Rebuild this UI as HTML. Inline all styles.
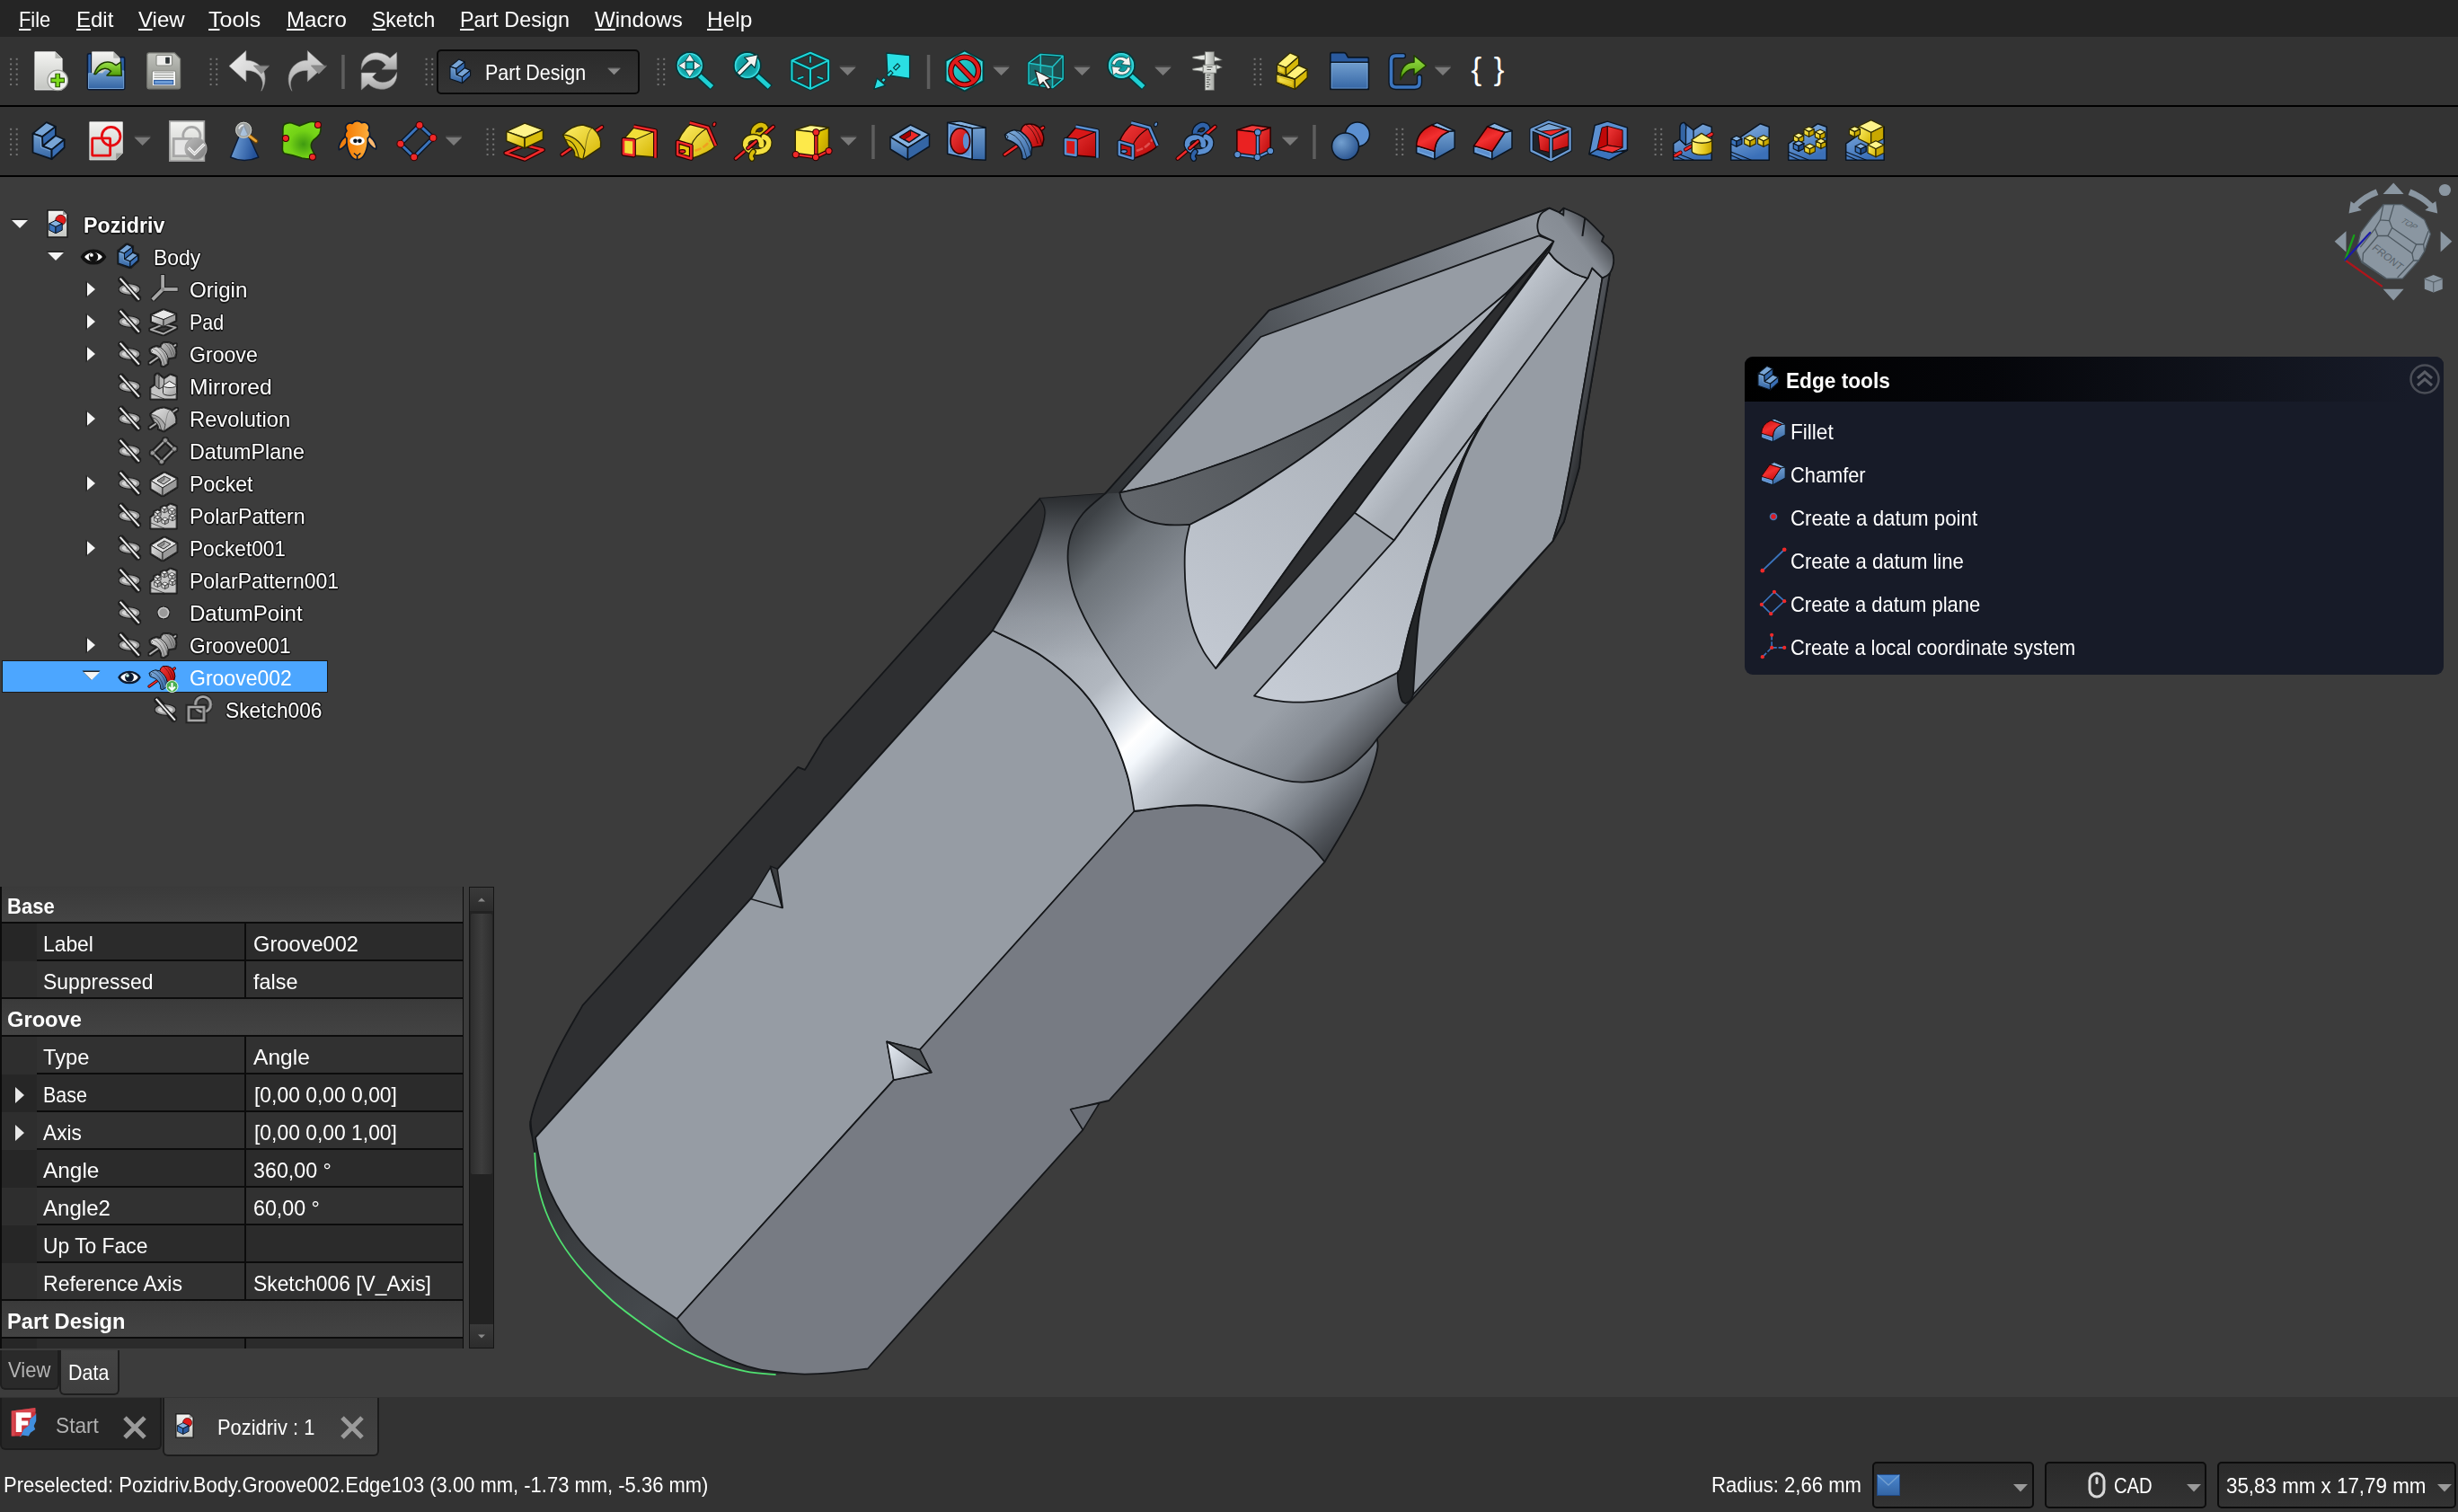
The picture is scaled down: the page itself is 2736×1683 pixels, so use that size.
<!DOCTYPE html><html><head><meta charset="utf-8"><title>FreeCAD</title><style>
*{box-sizing:border-box}
html,body{margin:0;padding:0}
body{width:2736px;height:1683px;overflow:hidden;background:#3c3c3c;position:relative;font-family:"Liberation Sans",sans-serif;color:#fff}
div,span.t,svg{position:absolute}
span.t{white-space:pre;transform-origin:0 50%;line-height:1;display:block}
span.o{text-shadow:-1.5px 0 #1c1c1c,1.5px 0 #1c1c1c,0 -1.5px #1c1c1c,0 1.5px #1c1c1c,-1px -1px #1c1c1c,1px 1px #1c1c1c,-1px 1px #1c1c1c,1px -1px #1c1c1c}
span.mn::first-letter{text-decoration:underline}
</style></head><body>
<svg width="2736" height="1683" viewBox="0 0 2736 1683" style="left:0;top:0"><defs><linearGradient id="gch" gradientUnits="userSpaceOnUse" x1="595.2" y1="1282.9" x2="863.6" y2="1530.1"><stop offset="0" stop-color="#2a2c2e"/><stop offset="0.25" stop-color="#3a3d40"/><stop offset="0.6" stop-color="#45494d"/><stop offset="0.85" stop-color="#34373a"/><stop offset="1" stop-color="#26282a"/></linearGradient><linearGradient id="gn2" gradientUnits="userSpaceOnUse" x1="987.2" y1="1159.4" x2="1029.9" y2="1196.0"><stop offset="0" stop-color="#e8eef6"/><stop offset="1" stop-color="#a0a6ae"/></linearGradient><linearGradient id="gcol" gradientUnits="userSpaceOnUse" x1="850.0" y1="850.0" x2="1225.0" y2="1225.0"><stop offset="0.000" stop-color="#989ea6"/><stop offset="0.133" stop-color="#9ca2aa"/><stop offset="0.240" stop-color="#a2a8b0"/><stop offset="0.387" stop-color="#b2b8c0"/><stop offset="0.467" stop-color="#dde3ea"/><stop offset="0.513" stop-color="#ffffff"/><stop offset="0.547" stop-color="#f4f8fc"/><stop offset="0.600" stop-color="#c8ced6"/><stop offset="0.667" stop-color="#b0b6be"/><stop offset="0.787" stop-color="#9ca2aa"/><stop offset="0.867" stop-color="#787e86"/><stop offset="0.933" stop-color="#50545a"/><stop offset="0.987" stop-color="#383b3f"/></linearGradient><linearGradient id="gcolv" gradientUnits="userSpaceOnUse" x1="0" y1="548" x2="0" y2="735"><stop offset="0" stop-color="#26282b" stop-opacity="1"/><stop offset="0.1" stop-color="#2e3134" stop-opacity="0.92"/><stop offset="0.28" stop-color="#34373b" stop-opacity="0.66"/><stop offset="0.5" stop-color="#3a3d42" stop-opacity="0.36"/><stop offset="0.75" stop-color="#40444a" stop-opacity="0.13"/><stop offset="1" stop-color="#40444a" stop-opacity="0"/></linearGradient><linearGradient id="gneck" gradientUnits="userSpaceOnUse" x1="850.0" y1="850.0" x2="1225.0" y2="1225.0"><stop offset="0.000" stop-color="#2c2f32"/><stop offset="0.120" stop-color="#3e4246"/><stop offset="0.213" stop-color="#6c7278"/><stop offset="0.347" stop-color="#8a9098"/><stop offset="0.480" stop-color="#9aa0a8"/><stop offset="0.680" stop-color="#9aa0a8"/><stop offset="0.787" stop-color="#838991"/><stop offset="0.853" stop-color="#5e6268"/><stop offset="0.907" stop-color="#34373a"/></linearGradient><linearGradient id="gbev" gradientUnits="userSpaceOnUse" x1="1230" y1="550" x2="1720" y2="235"><stop offset="0" stop-color="#2e3134"/><stop offset="0.37" stop-color="#464a4f"/><stop offset="0.55" stop-color="#60656b"/><stop offset="0.8" stop-color="#7e848c"/><stop offset="1" stop-color="#949aa2"/></linearGradient><linearGradient id="gcr" gradientUnits="userSpaceOnUse" x1="1250" y1="560" x2="1680" y2="330"><stop offset="0" stop-color="#62666b"/><stop offset="0.5" stop-color="#505458"/><stop offset="1" stop-color="#3c3f42"/></linearGradient><linearGradient id="gf1" gradientUnits="userSpaceOnUse" x1="1560" y1="400" x2="1330" y2="720"><stop offset="0" stop-color="#a8aeb6"/><stop offset="1" stop-color="#c2c8d1"/></linearGradient><linearGradient id="grid" gradientUnits="userSpaceOnUse" x1="1560" y1="420" x2="1625" y2="470"><stop offset="0" stop-color="#c8ced6"/><stop offset="0.2" stop-color="#e6ecf4"/><stop offset="0.5" stop-color="#c0c6ce"/><stop offset="1" stop-color="#aab0b8"/></linearGradient><linearGradient id="gf2" gradientUnits="userSpaceOnUse" x1="1640" y1="500" x2="1420" y2="790"><stop offset="0" stop-color="#aab0b8"/><stop offset="1" stop-color="#c6ccd5"/></linearGradient><linearGradient id="gstrip" gradientUnits="userSpaceOnUse" x1="1740" y1="480" x2="1765" y2="486"><stop offset="0" stop-color="#5a5e64"/><stop offset="1" stop-color="#2e3033"/></linearGradient><linearGradient id="gtip" gradientUnits="userSpaceOnUse" x1="1722.5" y1="291.4" x2="1781.5" y2="246.2"><stop offset="0" stop-color="#8e949c"/><stop offset="0.55" stop-color="#868c94"/><stop offset="0.8" stop-color="#5a5e64"/><stop offset="1" stop-color="#44484c"/></linearGradient></defs><path d="M1157.7 554.8L917.2 821.8L898.9 852.3L895.8 856.9L888.2 853.8L648.5 1119.1C643.9 1127.3 629.1 1152.1 621.0 1168.5C612.9 1184.9 604.8 1204.2 599.7 1217.4C594.6 1230.6 591.8 1240.3 590.5 1247.9C589.2 1255.5 591.1 1260.0 592.0 1263.1C592.9 1266.1 595.3 1265.7 596.0 1266.2L1104.9 701.8C1109.0 694.8 1121.2 675.6 1129.3 660.0C1137.4 644.4 1148.0 623.0 1153.7 608.2C1159.4 593.5 1162.8 580.4 1163.5 571.5C1164.2 562.6 1158.7 557.6 1157.7 554.8Z" fill="#2e2f31" stroke="#15171a" stroke-width="1.8" stroke-linejoin="round" /><path d="M596.0 1266.2C596.9 1270.8 598.6 1283.7 601.2 1293.5C603.8 1303.3 607.1 1314.6 611.7 1325.2C616.3 1335.8 622.0 1346.4 628.7 1357.0C635.4 1367.6 643.2 1378.8 652.0 1388.7C660.8 1398.6 671.0 1407.4 681.6 1416.2C692.2 1425.0 703.4 1432.9 715.4 1441.6C727.4 1450.2 747.1 1463.7 753.5 1468.1C756.3 1471.4 764.1 1482.4 770.5 1488.2C776.9 1494.0 783.9 1498.4 791.6 1503.0C799.4 1507.6 808.2 1512.2 817.0 1515.7C825.8 1519.2 834.7 1522.1 844.6 1524.2C854.5 1526.3 871.0 1527.7 876.3 1528.4L863.6 1530.1C858.0 1529.5 841.7 1528.7 829.7 1526.3C817.7 1523.9 804.3 1520.3 791.6 1515.7C778.9 1511.1 765.8 1505.5 753.5 1498.8C741.2 1492.1 729.6 1484.0 717.6 1475.5C705.6 1467.0 692.9 1457.9 681.6 1448.0C670.3 1438.1 659.3 1427.1 649.8 1416.2C640.3 1405.3 631.4 1393.7 624.4 1382.4C617.4 1371.1 611.9 1359.8 607.5 1348.5C603.1 1337.2 600.0 1325.6 598.0 1314.7C596.0 1303.8 595.7 1288.2 595.2 1282.9L591.0 1251.2Z" fill="url(#gch)" stroke="none" stroke-width="1.8" stroke-linejoin="round" /><path d="M590.5 1247.9C590.7 1250.2 591.1 1255.9 591.9 1261.7C592.7 1267.5 594.7 1279.4 595.2 1282.9" fill="none" stroke="#15171a" stroke-width="1.8"/><path d="M1104.9 701.8C1114.1 706.5 1143.0 718.9 1159.8 730.2C1176.6 741.6 1192.9 755.6 1205.6 769.9C1218.3 784.1 1228.0 800.5 1236.1 815.7C1244.2 831.0 1249.8 846.9 1254.4 861.4C1259.0 875.9 1262.1 895.7 1263.6 902.6L1023.8 1168.5L987.2 1159.4L994.8 1202.1L753.5 1468.1C747.1 1463.7 727.4 1450.2 715.4 1441.6C703.4 1432.9 692.2 1425.0 681.6 1416.2C671.0 1407.4 660.8 1398.6 652.0 1388.7C643.2 1378.8 635.4 1367.6 628.7 1357.0C622.0 1346.4 616.3 1335.8 611.7 1325.2C607.1 1314.6 603.8 1303.3 601.2 1293.5C598.6 1283.7 596.9 1270.8 596.0 1266.2L596.0 1266.2Z" fill="#969ca4" stroke="#15171a" stroke-width="1.8" stroke-linejoin="round" /><path d="M1262.5 903.0C1270.9 902.0 1297.5 897.9 1312.7 896.9C1327.9 895.9 1339.8 895.9 1353.4 897.3C1367.0 898.7 1380.5 901.0 1394.1 905.4C1407.7 909.8 1423.9 917.6 1434.8 923.7C1445.7 929.8 1452.6 936.2 1459.2 942.1C1465.8 948.0 1472.0 956.4 1474.5 959.3L1234.4 1225.0L1191.7 1234.8L1205.4 1257.6L965.9 1523.5C959.3 1524.3 937.9 1527.1 926.2 1528.1C914.5 1529.1 904.0 1529.5 895.7 1529.6C887.4 1529.6 884.8 1529.3 876.3 1528.4C867.8 1527.5 854.5 1526.3 844.6 1524.2C834.7 1522.1 825.8 1519.2 817.0 1515.7C808.2 1512.2 799.4 1507.6 791.6 1503.0C783.9 1498.4 776.9 1494.0 770.5 1488.2C764.1 1482.4 756.3 1471.4 753.5 1468.1L994.8 1202.1L1036.7 1193.6L1023.8 1168.5Z" fill="#777b83" stroke="#15171a" stroke-width="1.8" stroke-linejoin="round" /><path d="M595.2 1282.9C595.7 1288.2 596.0 1303.8 598.0 1314.7C600.0 1325.6 603.1 1337.2 607.5 1348.5C611.9 1359.8 617.4 1371.1 624.4 1382.4C631.4 1393.7 640.3 1405.3 649.8 1416.2C659.3 1427.1 670.3 1438.1 681.6 1448.0C692.9 1457.9 705.6 1467.0 717.6 1475.5C729.6 1484.0 741.2 1492.1 753.5 1498.8C765.8 1505.5 778.9 1511.1 791.6 1515.7C804.3 1520.3 817.7 1523.9 829.7 1526.3C841.7 1528.7 858.0 1529.5 863.6 1530.1" fill="none" stroke="#50e070" stroke-width="1.8"/><path d="M987.2 1159.4L1036.7 1193.6L994.8 1202.1Z" fill="url(#gn2)" stroke="#15171a" stroke-width="1.5" stroke-linejoin="round" /><path d="M987.2 1159.4L1023.8 1168.5L1036.7 1193.6Z" fill="#4e5256" stroke="#15171a" stroke-width="1.5" stroke-linejoin="round" /><path d="M836.2 1000.7L857.5 965.6L870.6 1010.5Z" fill="#939aa2" stroke="#15171a" stroke-width="1.5" stroke-linejoin="round" /><path d="M857.5 964.1L865.2 967.1L871.3 1010.5Z" fill="#3a3c3f" stroke="#15171a" stroke-width="1.5" stroke-linejoin="round" /><path d="M1191.7 1234.8L1223.7 1228.0L1205.4 1257.6Z" fill="#6a6e76" stroke="#15171a" stroke-width="1.5" stroke-linejoin="round" /><path d="M1157.7 554.8L1230.0 549.6L1400.0 700.0L1532.4 820.0C1532.6 822.0 1534.1 826.8 1533.4 832.2C1532.7 837.6 1531.3 843.7 1528.4 852.5C1525.5 861.3 1521.6 873.2 1516.2 885.1C1510.8 897.0 1502.8 911.3 1495.8 923.7C1488.8 936.1 1478.0 953.4 1474.5 959.3C1472.0 956.4 1465.8 948.0 1459.2 942.1C1452.6 936.2 1445.7 929.8 1434.8 923.7C1423.9 917.6 1407.7 909.8 1394.1 905.4C1380.5 901.0 1367.0 898.7 1353.4 897.3C1339.8 895.9 1327.9 895.9 1312.7 896.9C1297.5 897.9 1270.9 902.0 1262.5 903.0C1261.2 896.1 1258.8 875.9 1254.4 861.4C1250.0 846.9 1244.2 831.0 1236.1 815.7C1228.0 800.5 1218.3 784.1 1205.6 769.9C1192.9 755.6 1176.6 741.6 1159.8 730.2C1143.0 718.9 1114.1 706.5 1104.9 701.8C1109.0 694.8 1121.2 675.6 1129.3 660.0C1137.4 644.4 1148.0 623.0 1153.7 608.2C1159.4 593.5 1162.8 580.4 1163.5 571.5C1164.2 562.6 1158.7 557.6 1157.7 554.8Z" fill="url(#gcol)" stroke="#15171a" stroke-width="1.8" stroke-linejoin="round" /><path d="M1157.7 554.8L1230.0 549.6L1300.0 640.0L1240.0 760.0L1104.9 701.8C1109.0 694.8 1121.2 675.6 1129.3 660.0C1137.4 644.4 1148.0 623.0 1153.7 608.2C1159.4 593.5 1162.8 580.4 1163.5 571.5C1164.2 562.6 1158.7 557.6 1157.7 554.8Z" fill="url(#gcolv)" stroke="none" stroke-width="1.8" stroke-linejoin="round" /><path d="M1230.0 549.6C1225.9 553.2 1212.0 563.8 1205.6 571.5C1199.2 579.2 1194.6 586.8 1191.8 596.0C1189.0 605.2 1188.0 615.3 1188.8 626.5C1189.6 637.7 1191.1 648.9 1196.4 663.1C1201.7 677.3 1208.4 692.1 1220.8 711.9C1233.2 731.7 1252.4 762.3 1270.9 782.1C1289.4 801.9 1309.5 817.7 1331.9 830.9C1354.3 844.1 1385.4 854.8 1405.2 861.4C1425.0 868.0 1436.2 870.9 1450.9 870.6C1465.7 870.4 1482.0 865.5 1493.7 859.9C1505.4 854.3 1514.5 843.4 1521.1 837.0C1527.7 830.6 1531.3 824.3 1533.3 821.8L1728.6 602.1L1740.8 580.7L1758.0 520.0L1762.2 480.0L1791.9 303.9L1796.1 291.4L1794.0 279.6L1782.9 268.5L1785.0 262.9L1764.2 242.8L1740.6 231.7L1735.7 236.5L1724.6 231.7L1412.5 345.7Z" fill="url(#gneck)" stroke="#15171a" stroke-width="1.8" stroke-linejoin="round" /><path d="M1412.5 345.7L1724.6 231.7L1714.9 238.6L1711.4 249.7L1712.8 259.4L1712.9 262.3L1403.3 375.0L1246.5 548.7L1230.0 549.6Z" fill="url(#gbev)" stroke="none" stroke-width="1.8" stroke-linejoin="round" /><path d="M1230.0 549.6L1412.5 345.7L1724.6 231.7" fill="none" stroke="#15171a" stroke-width="1.8" stroke-linejoin="round"/><path d="M1403.3 375.0L1712.9 262.3L1729.4 268.5C1720.8 277.9 1697.7 306.2 1678.0 324.8C1658.3 343.4 1629.6 366.0 1611.3 380.0C1593.0 394.0 1582.3 399.5 1568.3 408.7C1554.3 417.9 1541.0 426.8 1527.3 435.4C1513.6 443.9 1500.0 452.5 1486.3 460.0C1472.6 467.5 1460.7 473.3 1445.3 480.5C1429.9 487.7 1411.1 496.2 1394.0 503.0C1376.9 509.8 1359.9 515.7 1342.8 521.5C1325.7 527.3 1307.6 533.4 1291.5 537.9C1275.4 542.4 1253.9 546.7 1246.4 548.5Z" fill="#969ca4" stroke="#15171a" stroke-width="1.8" stroke-linejoin="round" /><path d="M1246.5 548.7C1246.8 550.0 1246.8 553.0 1248.5 556.3C1250.2 559.6 1252.3 564.8 1256.7 568.6C1261.1 572.4 1268.3 576.3 1275.1 578.9C1281.9 581.5 1289.5 583.1 1297.7 584.0C1305.9 584.9 1319.9 584.0 1324.3 584.0C1332.5 579.7 1358.5 566.9 1373.5 558.4C1388.5 549.9 1400.8 541.6 1414.5 532.7C1428.2 523.8 1441.8 514.8 1455.5 505.1C1469.2 495.4 1482.8 484.9 1496.5 474.3C1510.2 463.7 1523.8 452.8 1537.5 441.5C1551.2 430.2 1566.5 416.6 1578.5 406.7C1590.5 396.8 1592.7 395.7 1609.3 382.1C1625.9 368.5 1666.5 334.7 1678.0 325.2C1666.9 334.3 1629.6 366.1 1611.3 380.0C1593.0 393.9 1582.3 399.5 1568.3 408.7C1554.3 417.9 1541.0 426.8 1527.3 435.4C1513.6 443.9 1500.0 452.5 1486.3 460.0C1472.6 467.5 1460.7 473.3 1445.3 480.5C1429.9 487.7 1411.1 496.2 1394.0 503.0C1376.9 509.8 1359.9 515.7 1342.8 521.5C1325.7 527.3 1307.6 533.4 1291.5 537.9C1275.4 542.4 1253.9 546.7 1246.4 548.5Z" fill="url(#gcr)" stroke="#15171a" stroke-width="1.8" stroke-linejoin="round" /><path d="M1324.3 584.0C1332.5 579.7 1358.5 566.9 1373.5 558.4C1388.5 549.9 1400.8 541.6 1414.5 532.7C1428.2 523.8 1441.8 514.8 1455.5 505.1C1469.2 495.4 1482.8 484.9 1496.5 474.3C1510.2 463.7 1523.8 452.8 1537.5 441.5C1551.2 430.2 1566.5 416.6 1578.5 406.7C1590.5 396.8 1592.7 395.7 1609.3 382.1C1625.9 368.5 1666.5 334.7 1678.0 325.2L1727.2 271.5C1711.3 289.6 1656.6 351.7 1631.8 380.0C1607.0 408.3 1597.6 418.3 1578.5 441.5C1559.4 464.7 1537.5 492.8 1517.0 519.4C1496.5 546.0 1476.3 573.0 1455.5 601.4C1434.7 629.8 1409.0 666.2 1392.0 690.0C1375.0 713.8 1359.8 735.0 1353.3 744.0C1351.0 740.9 1343.7 732.0 1339.7 725.1C1335.7 718.2 1332.2 710.6 1329.4 702.9C1326.6 695.2 1324.6 687.0 1323.0 679.0C1321.4 671.0 1320.5 663.1 1319.8 655.2C1319.1 647.3 1318.8 639.3 1318.7 631.4C1318.6 623.5 1318.5 615.5 1319.4 607.6C1320.3 599.7 1323.5 587.9 1324.3 584.0Z" fill="url(#gf1)" stroke="#15171a" stroke-width="1.8" stroke-linejoin="round" /><path d="M1727.2 271.5C1711.3 289.6 1656.6 351.7 1631.8 380.0C1607.0 408.3 1597.6 418.3 1578.5 441.5C1559.4 464.7 1537.5 492.8 1517.0 519.4C1496.5 546.0 1476.3 573.0 1455.5 601.4C1434.7 629.8 1409.0 666.2 1392.0 690.0C1375.0 713.8 1359.8 735.0 1353.3 744.0L1402.2 690.0L1507.8 570.7L1650.3 380.0L1727.6 271.9Z" fill="#2c2d2f" stroke="#15171a" stroke-width="1.8" stroke-linejoin="round" /><path d="M1723.9 280.3L1650.3 380.0L1507.8 570.7L1551.9 601.4L1656.4 460.0L1715.9 380.0L1767.3 309.8C1764.5 308.7 1756.0 306.4 1750.3 303.2C1744.6 300.0 1737.3 294.5 1732.9 290.7C1728.5 286.9 1725.4 282.0 1723.9 280.3Z" fill="url(#grid)" stroke="#15171a" stroke-width="1.8" stroke-linejoin="round" /><path d="M1396.0 774.5L1551.9 601.4L1656.4 460.0C1653.0 465.8 1643.8 478.8 1635.9 494.8C1628.1 510.9 1615.5 538.8 1609.3 556.3C1603.0 573.8 1602.9 583.2 1598.4 599.7C1593.9 616.2 1587.5 638.0 1582.5 655.2C1577.5 672.4 1572.2 688.4 1568.3 702.9C1564.4 717.4 1561.1 734.9 1559.0 742.5C1556.9 750.1 1556.4 747.6 1555.9 748.6C1551.6 750.7 1538.5 757.5 1530.2 761.3C1521.9 765.0 1514.2 768.4 1506.3 771.1C1498.3 773.9 1490.4 776.1 1482.5 777.8C1474.6 779.5 1466.6 780.5 1458.7 781.1C1450.8 781.7 1442.8 781.9 1434.9 781.4C1427.0 780.9 1417.6 779.4 1411.1 778.3C1404.6 777.1 1398.5 775.1 1396.0 774.5Z" fill="url(#gf2)" stroke="#15171a" stroke-width="1.8" stroke-linejoin="round" /><path d="M1656.4 460.0C1653.0 465.8 1643.8 478.8 1635.9 494.8C1628.1 510.9 1615.5 538.8 1609.3 556.3C1603.0 573.8 1602.9 583.2 1598.4 599.7C1593.9 616.2 1587.5 638.0 1582.5 655.2C1577.5 672.4 1572.2 688.4 1568.3 702.9C1564.4 717.4 1561.1 734.9 1559.0 742.5C1556.9 750.1 1556.3 744.6 1555.9 748.6C1555.5 752.6 1556.1 761.1 1556.8 766.3C1557.5 771.5 1559.0 777.0 1560.3 779.8C1561.6 782.6 1564.0 782.7 1564.8 783.3C1566.2 781.6 1571.2 781.1 1573.0 773.0C1574.8 764.9 1574.3 748.9 1575.4 734.6C1576.5 720.3 1577.4 702.9 1579.7 687.0C1582.0 671.1 1585.6 653.9 1589.2 639.4C1592.8 624.9 1594.8 621.1 1601.6 599.7C1608.4 578.3 1620.7 534.5 1629.8 511.2C1638.9 487.9 1652.0 468.5 1656.4 460.0Z" fill="#232527" stroke="#15171a" stroke-width="1.8" stroke-linejoin="round" /><path d="M1767.3 309.8L1772.2 298.3L1783.6 309.4L1747.7 520.0L1737.8 571.5L1728.6 602.1L1573.0 773.0C1573.4 766.6 1574.3 748.9 1575.4 734.6C1576.5 720.3 1577.4 702.9 1579.7 687.0C1582.0 671.1 1585.6 653.9 1589.2 639.4C1592.8 624.9 1594.8 621.1 1601.6 599.7C1608.4 578.3 1620.7 534.5 1629.8 511.2C1638.9 487.9 1652.0 468.5 1656.4 460.0L1767.3 309.8Z" fill="#969ca4" stroke="#15171a" stroke-width="1.8" stroke-linejoin="round" /><path d="M1783.6 309.4L1791.9 303.9L1762.2 480.0L1758.0 520.0L1740.8 580.7L1728.6 602.1L1737.8 571.5L1747.7 520.0Z" fill="url(#gstrip)" stroke="#15171a" stroke-width="1.8" stroke-linejoin="round" /><path d="M1724.6 231.7L1735.7 236.5L1740.6 231.7C1744.5 233.5 1756.8 237.6 1764.2 242.8C1771.6 248.0 1781.5 259.5 1785.0 262.9L1782.9 268.5C1784.8 270.4 1791.8 275.8 1794.0 279.6C1796.2 283.4 1796.4 287.3 1796.1 291.4C1795.8 295.4 1794.0 300.9 1791.9 303.9C1789.8 306.9 1785.0 308.5 1783.6 309.4L1772.2 298.3L1767.3 309.8C1764.5 308.7 1756.0 306.4 1750.3 303.2C1744.6 300.0 1737.3 294.5 1732.9 290.7C1728.5 286.9 1725.4 282.0 1723.9 280.3L1729.4 268.5L1716.2 262.2C1715.6 261.7 1713.6 261.5 1712.8 259.4C1712.0 257.3 1711.1 253.2 1711.4 249.7C1711.8 246.2 1712.7 241.6 1714.9 238.6C1717.1 235.6 1723.0 232.8 1724.6 231.7Z" fill="url(#gtip)" stroke="#15171a" stroke-width="1.8" stroke-linejoin="round" /><path d="M1764.2 242.8L1761.4 262.9M1740.6 231.7L1740.2 239.3L1735.7 236.5" fill="none" stroke="#15171a" stroke-width="2"/><path d="M2664.2 203.5L2675.6 215.9L2652.6 215.9Z" fill="#8a96a1" stroke="none" stroke-width="1" stroke-linejoin="round" /><path d="M2664.2 334.4L2675.6 321.7L2652.6 321.7Z" fill="#8a96a1" stroke="none" stroke-width="1" stroke-linejoin="round" /><path d="M2598.6 268.8L2611.5 257.2L2611.5 280.5Z" fill="#8a96a1" stroke="none" stroke-width="1" stroke-linejoin="round" /><path d="M2729.3 268.8L2716.6 257.2L2716.6 280.5Z" fill="#8a96a1" stroke="none" stroke-width="1" stroke-linejoin="round" /><circle cx="2721.4" cy="211.5" r="6.6" fill="#8a96a1"/><path d="M2644.7 210.6L2647.3 217.0Q2634.1 221.7 2624.6 230.7L2628.8 233.9L2614.5 237.6L2616.6 223.9L2620.1 226.5Q2630.9 215.9 2644.7 210.6Z" fill="#8a96a1"/><path d="M2683.3 210.6L2680.6 217.0Q2693.9 221.7 2703.4 230.7L2699.2 233.9L2713.2 237.6L2711.3 223.9L2707.8 226.5Q2697.0 215.9 2683.3 210.6Z" fill="#8a96a1"/><path d="M2708.7 305.9L2718.7 310.1L2718.7 321.7L2708.7 325.4L2698.8 321.7L2698.8 310.1Z" fill="#8a96a1" stroke="none" stroke-width="1" stroke-linejoin="round" /><path d="M2698.8 310.4L2708.7 314.0L2718.7 310.4" fill="none" stroke="#5a646c" stroke-width="1.2" stroke-linecap="round"/><path d="M2708.7 314.0L2708.7 325.2" fill="none" stroke="#5a646c" stroke-width="1.2" stroke-linecap="round"/><path d="M2653.1 227.6L2673.8 227.6L2698.6 244.5L2705.5 260.4L2698.6 279.9L2692.3 290.0L2674.3 310.1L2656.3 310.1L2628.8 292.1L2623.0 278.9L2627.7 258.8L2640.4 241.9Z" fill="#8a96a1" stroke="#4e5961" stroke-width="1.3" stroke-linejoin="round" /><path d="M2653.1 227.6L2649.4 245.0L2659.5 245.6L2664.8 227.6" fill="none" stroke="#4e5961" stroke-width="1.3" stroke-linecap="round"/><path d="M2649.4 245.0L2643.6 254.6L2646.8 262.5L2657.9 262.5L2662.6 253.5L2659.5 245.6" fill="none" stroke="#4e5961" stroke-width="1.3" stroke-linecap="round"/><path d="M2662.6 253.5L2689.6 272.0L2697.6 272.0L2702.9 257.7" fill="none" stroke="#4e5961" stroke-width="1.3" stroke-linecap="round"/><path d="M2657.9 262.5L2684.9 282.1L2689.6 272.0" fill="none" stroke="#4e5961" stroke-width="1.3" stroke-linecap="round"/><path d="M2684.9 282.1L2686.5 290.0L2692.3 290.0" fill="none" stroke="#4e5961" stroke-width="1.3" stroke-linecap="round"/><path d="M2697.6 272.0L2698.6 279.9" fill="none" stroke="#4e5961" stroke-width="1.3" stroke-linecap="round"/><path d="M2646.8 262.5L2630.4 282.1L2629.8 291.6" fill="none" stroke="#4e5961" stroke-width="1.3" stroke-linecap="round"/><path d="M2643.6 254.6L2627.7 274.7" fill="none" stroke="#4e5961" stroke-width="1.3" stroke-linecap="round"/><path d="M2686.5 290.0L2669.0 308.5" fill="none" stroke="#4e5961" stroke-width="1.3" stroke-linecap="round"/><path d="M2629.8 291.6L2655.2 309.6" fill="none" stroke="#4e5961" stroke-width="1.3" stroke-linecap="round"/><text x="0" y="3" font-family="Liberation Sans, sans-serif" font-size="9" fill="#59636b" text-anchor="middle" transform="translate(2681.7 249.3) rotate(30) skewX(-25)">TOP</text><text x="0" y="4" font-family="Liberation Sans, sans-serif" font-size="11.5" fill="#59636b" text-anchor="middle" transform="translate(2657.9 286.3) rotate(38) skewX(-8)">FRONT</text><path d="M2610.3 289.5L2651.0 318.3" stroke="#b0151b" stroke-width="2.2" stroke-linecap="round"/><path d="M2610.3 289.5L2620.3 262.0" stroke="#18a01a" stroke-width="2.2" stroke-linecap="round"/><path d="M2610.3 289.5L2638.1 259.0" stroke="#1a1aa8" stroke-width="2.2" stroke-linecap="round"/></svg>
<div style="left:0px;top:0px;width:2736px;height:41px;background:#252525;"></div>
<div style="left:0px;top:41px;width:2736px;height:76px;background:#333333;"></div>
<div style="left:0px;top:117px;width:2736px;height:2px;background:#000;"></div>
<div style="left:0px;top:119px;width:2736px;height:76px;background:#333333;"></div>
<div style="left:0px;top:195px;width:2736px;height:2px;background:#000;"></div>
<div style="left:486px;top:55px;width:226px;height:50px;background:linear-gradient(#2b2b2b,#343434);border:2px solid #0a0a0a;border-radius:5px"></div>
<div style="left:2px;top:735px;width:363px;height:36px;background:#4ca6ff;border:1px solid #1a1a1a"></div>
<div style="left:0px;top:986px;width:552px;height:516px;background:#3c3c3c;"></div>
<div style="left:0px;top:987px;width:516px;height:514px;background:#0c0c0c;"></div>
<div style="left:2px;top:987px;width:513px;height:39px;background:linear-gradient(#3a3a3a,#434343);"></div>
<div style="left:2px;top:1028px;width:39px;height:42px;background:#262626;"></div>
<div style="left:41px;top:1028px;width:231px;height:40px;background:#2b2b2b;"></div>
<div style="left:274px;top:1028px;width:241px;height:40px;background:#2b2b2b;"></div>
<div style="left:2px;top:1070px;width:39px;height:40px;background:#2e2e2e;"></div>
<div style="left:41px;top:1070px;width:231px;height:40px;background:#313131;"></div>
<div style="left:274px;top:1070px;width:241px;height:40px;background:#313131;"></div>
<div style="left:2px;top:1112px;width:513px;height:40px;background:linear-gradient(#3a3a3a,#434343);"></div>
<div style="left:2px;top:1154px;width:39px;height:42px;background:#2e2e2e;"></div>
<div style="left:41px;top:1154px;width:231px;height:40px;background:#313131;"></div>
<div style="left:274px;top:1154px;width:241px;height:40px;background:#313131;"></div>
<div style="left:2px;top:1196px;width:39px;height:42px;background:#262626;"></div>
<div style="left:41px;top:1196px;width:231px;height:40px;background:#2b2b2b;"></div>
<div style="left:274px;top:1196px;width:241px;height:40px;background:#2b2b2b;"></div>
<div style="left:2px;top:1238px;width:39px;height:42px;background:#2e2e2e;"></div>
<div style="left:41px;top:1238px;width:231px;height:40px;background:#313131;"></div>
<div style="left:274px;top:1238px;width:241px;height:40px;background:#313131;"></div>
<div style="left:2px;top:1280px;width:39px;height:42px;background:#262626;"></div>
<div style="left:41px;top:1280px;width:231px;height:40px;background:#2b2b2b;"></div>
<div style="left:274px;top:1280px;width:241px;height:40px;background:#2b2b2b;"></div>
<div style="left:2px;top:1322px;width:39px;height:42px;background:#2e2e2e;"></div>
<div style="left:41px;top:1322px;width:231px;height:40px;background:#313131;"></div>
<div style="left:274px;top:1322px;width:241px;height:40px;background:#313131;"></div>
<div style="left:2px;top:1364px;width:39px;height:42px;background:#262626;"></div>
<div style="left:41px;top:1364px;width:231px;height:40px;background:#2b2b2b;"></div>
<div style="left:274px;top:1364px;width:241px;height:40px;background:#2b2b2b;"></div>
<div style="left:2px;top:1406px;width:39px;height:40px;background:#2e2e2e;"></div>
<div style="left:41px;top:1406px;width:231px;height:40px;background:#313131;"></div>
<div style="left:274px;top:1406px;width:241px;height:40px;background:#313131;"></div>
<div style="left:2px;top:1448px;width:513px;height:40px;background:linear-gradient(#3a3a3a,#434343);"></div>
<div style="left:2px;top:1490px;width:39px;height:11px;background:#262626;"></div>
<div style="left:41px;top:1490px;width:231px;height:11px;background:#2b2b2b;"></div>
<div style="left:274px;top:1490px;width:241px;height:11px;background:#2b2b2b;"></div>
<div style="left:516px;top:986px;width:6px;height:516px;background:#3c3c3c;"></div>
<div style="left:522px;top:987px;width:28px;height:514px;background:#222222;border:1px solid #151515"></div>
<div style="left:523px;top:988px;width:26px;height:26px;background:linear-gradient(#3a3a3a,#2c2c2c);"></div>
<div style="left:523px;top:1474px;width:26px;height:26px;background:linear-gradient(#3a3a3a,#2c2c2c);"></div>
<div style="left:524px;top:1017px;width:24px;height:290px;background:linear-gradient(90deg,#2e2e2e,#3d3d3d 50%,#2e2e2e);border-radius:2px"></div>
<svg style="left:532px;top:999px" width="8" height="5"><path d="M0 4.5L4 0.5L8 4.5Z" fill="#8a8a8a"/></svg>
<svg style="left:532px;top:1485px" width="8" height="5"><path d="M0 0.5L4 4.5L8 0.5Z" fill="#8a8a8a"/></svg>
<svg style="left:16px;top:1210px" width="12" height="18"><path d="M1 0L11 9L1 18Z" fill="#e8e8e8"/></svg>
<svg style="left:16px;top:1252px" width="12" height="18"><path d="M1 0L11 9L1 18Z" fill="#e8e8e8"/></svg>
<div style="left:0px;top:1502px;width:552px;height:53px;background:#3c3c3c;"></div>
<div style="left:0px;top:1503px;width:66px;height:44px;background:#2a2a2a;border:2px solid #1e1e1e;border-top:none;border-radius:0 0 6px 6px"></div>
<div style="left:66px;top:1503px;width:67px;height:50px;background:linear-gradient(#444,#3e3e3e);border:2px solid #1e1e1e;border-top:none;border-radius:0 0 6px 6px"></div>
<div style="left:0px;top:1555px;width:2736px;height:128px;background:#333333;"></div>
<div style="left:0px;top:1556px;width:180px;height:58px;background:#262626;border:2px solid #1c1c1c;border-top:none;border-radius:0 0 6px 6px"></div>
<div style="left:181px;top:1556px;width:241px;height:65px;background:linear-gradient(#3c3c3c,#424242);border:2px solid #1c1c1c;border-top:none;border-radius:0 0 6px 6px"></div>
<div style="left:2084px;top:1627px;width:180px;height:52px;background:linear-gradient(#2a2a2a,#333);border:2px solid #0c0c0c;border-radius:5px"></div>
<div style="left:2276px;top:1627px;width:180px;height:52px;background:linear-gradient(#2a2a2a,#333);border:2px solid #0c0c0c;border-radius:5px"></div>
<div style="left:2468px;top:1627px;width:266px;height:52px;background:linear-gradient(#2a2a2a,#333);border:2px solid #0c0c0c;border-radius:5px"></div>
<div style="left:2089px;top:1641px;width:26px;height:24px;background:linear-gradient(#4a86cf,#3465a4);border:1px solid #204a87"></div>
<svg style="left:2089px;top:1641px" width="26" height="24"><path d="M1 1L13 12L25 1" fill="none" stroke="#729fcf" stroke-width="1.5"/></svg>
<svg style="left:2241px;top:1652px" width="16" height="9"><path d="M0 0H16L8 8.5Z" fill="#9a9a9a"/></svg>
<svg style="left:2433.5px;top:1652px" width="16" height="9"><path d="M0 0H16L8 8.5Z" fill="#9a9a9a"/></svg>
<svg style="left:2713px;top:1652px" width="16" height="9"><path d="M0 0H16L8 8.5Z" fill="#9a9a9a"/></svg>
<svg style="left:2324px;top:1638px" width="20" height="30"><rect x="2" y="2" width="16" height="26" rx="8" fill="none" stroke="#d8d8d8" stroke-width="3"/><rect x="8.5" y="6" width="3" height="8" rx="1.5" fill="#d8d8d8"/></svg>
<svg style="left:135.7px;top:1575px" width="28" height="28"><path d="M3 3L25 25M25 3L3 25" stroke="#9a9a9a" stroke-width="5" fill="none"/></svg>
<svg style="left:378px;top:1575px" width="28" height="28"><path d="M3 3L25 25M25 3L3 25" stroke="#9a9a9a" stroke-width="5" fill="none"/></svg>
<div style="left:1942px;top:397px;width:778px;height:354px;background:#171b28;border-radius:9px"></div>
<div style="left:1942px;top:397px;width:778px;height:50px;background:linear-gradient(90deg,#000 0%,#05060a 35%,#10131c 70%,#171b28 95%);border-radius:9px 9px 0 0"></div>
<svg style="left:2681px;top:404px" width="36" height="36"><circle cx="18" cy="18" r="15.5" fill="none" stroke="#4a4d56" stroke-width="2.5"/><path d="M10 17L18 10L26 17M10 25L18 18L26 25" fill="none" stroke="#5a5d66" stroke-width="3"/></svg>
<svg width="2736" height="1683" viewBox="0 0 2736 1683" style="left:0;top:0"><defs>
<linearGradient id="ib" x1="0" y1="0" x2="1" y2="1"><stop offset="0" stop-color="#86b2e0"/><stop offset="1" stop-color="#3465a4"/></linearGradient>
<linearGradient id="ib2" x1="0" y1="0" x2="0" y2="1"><stop offset="0" stop-color="#729fcf"/><stop offset="1" stop-color="#3465a4"/></linearGradient>
<linearGradient id="iy" x1="0" y1="0" x2="1" y2="1"><stop offset="0" stop-color="#fff06a"/><stop offset="1" stop-color="#d4b400"/></linearGradient>
<linearGradient id="iy2" x1="0" y1="0" x2="1" y2="1"><stop offset="0" stop-color="#edd400"/><stop offset="1" stop-color="#b89800"/></linearGradient>
<linearGradient id="ir" x1="0" y1="0" x2="1" y2="1"><stop offset="0" stop-color="#f23a3a"/><stop offset="1" stop-color="#b80808"/></linearGradient>
<linearGradient id="ig" x1="0" y1="0" x2="0" y2="1"><stop offset="0" stop-color="#f4f4f2"/><stop offset="1" stop-color="#c4c6c2"/></linearGradient>
<linearGradient id="igr" x1="0" y1="0" x2="0" y2="1"><stop offset="0" stop-color="#d8d8d8"/><stop offset="1" stop-color="#8c8c8c"/></linearGradient>
<linearGradient id="ic" x1="0" y1="0" x2="1" y2="1"><stop offset="0" stop-color="#34e0e2"/><stop offset="1" stop-color="#06989a"/></linearGradient>
<linearGradient id="ign" x1="0" y1="0" x2="0" y2="1"><stop offset="0" stop-color="#9be34a"/><stop offset="1" stop-color="#4e9a06"/></linearGradient>
<radialGradient id="igb" cx="0.55" cy="0.6" r="0.6"><stop offset="0" stop-color="#3f9a10"/><stop offset="0.6" stop-color="#73d216"/><stop offset="1" stop-color="#7ddc1c"/></radialGradient>
<linearGradient id="ior" x1="0" y1="0" x2="1" y2="0"><stop offset="0" stop-color="#f57900"/><stop offset="1" stop-color="#fcaf3e"/></linearGradient>
<radialGradient id="isp" cx="0.35" cy="0.35" r="0.8"><stop offset="0" stop-color="#729fcf"/><stop offset="1" stop-color="#204a87"/></radialGradient>
<linearGradient id="igy" x1="0" y1="0" x2="1" y2="1"><stop offset="0" stop-color="#e4e4e4"/><stop offset="1" stop-color="#9a9a9a"/></linearGradient>
<linearGradient id="igy2" x1="0" y1="0" x2="1" y2="1"><stop offset="0" stop-color="#bdbdbd"/><stop offset="1" stop-color="#7c7c7c"/></linearGradient>
<linearGradient id="isv" x1="0" y1="0" x2="0" y2="1"><stop offset="0" stop-color="#c2c4be"/><stop offset="1" stop-color="#858781"/></linearGradient>
<linearGradient id="icn" x1="0" y1="0" x2="1" y2="0.3"><stop offset="0" stop-color="#7fb0e4"/><stop offset="1" stop-color="#24529a"/></linearGradient>
<linearGradient id="icl" x1="0" y1="0" x2="1" y2="0"><stop offset="0" stop-color="#eceeea"/><stop offset="1" stop-color="#a4a6a2"/></linearGradient>
<linearGradient id="irf" x1="0" y1="0" x2="0.6" y2="1"><stop offset="0" stop-color="#c60c0c"/><stop offset="0.55" stop-color="#f23030"/><stop offset="1" stop-color="#cc1010"/></linearGradient>
<linearGradient id="ibs" x1="0" y1="0" x2="0.4" y2="1"><stop offset="0" stop-color="#8ab4e2"/><stop offset="1" stop-color="#3b70b8"/></linearGradient>
<linearGradient id="iyc" x1="0" y1="0" x2="1" y2="0"><stop offset="0" stop-color="#fff27a"/><stop offset="0.6" stop-color="#e6ca20"/><stop offset="1" stop-color="#c4a000"/></linearGradient>
<linearGradient id="igu" x1="0" y1="0" x2="1" y2="1"><stop offset="0" stop-color="#f0f0f0"/><stop offset="0.6" stop-color="#d4d4d4"/><stop offset="1" stop-color="#a8a8a8"/></linearGradient>
<linearGradient id="igu2" x1="0" y1="0" x2="0" y2="1"><stop offset="0" stop-color="#dcdcdc"/><stop offset="1" stop-color="#a4a4a4"/></linearGradient>
<radialGradient id="icr" cx="0.5" cy="0.5" r="0.5"><stop offset="0" stop-color="#0c8e92"/><stop offset="0.7" stop-color="#12a8ac"/><stop offset="1" stop-color="#2cdade"/></radialGradient>
<filter id="ol" x="-20%" y="-20%" width="140%" height="140%"><feMorphology in="SourceAlpha" operator="dilate" radius="1.3" result="d"/><feFlood flood-color="#1e1e1e"/><feComposite in2="d" operator="in" result="o"/><feMerge><feMergeNode in="o"/><feMergeNode in="SourceGraphic"/></feMerge></filter></defs><g transform="translate(33.0 55.0) scale(0.7500)"><g><path d="M7.8 3.7H38L48.2 13.4V60H7.8Z" fill="url(#ig)" stroke="#fff" stroke-width="1"/><path d="M38 3.7V13.4H48.2Z" fill="#b4b6b2"/><circle cx="41.6" cy="45.9" r="15" fill="#eeeeec" stroke="#9a9c98" stroke-width="1.6"/><path d="M41.6 35.5V56.3M31.2 45.9H52" stroke="#2a5800" stroke-width="7.6"/><path d="M41.6 36.8V55M32.5 45.9H50.7" stroke="#7edc1e" stroke-width="4.4"/></g></g><g transform="translate(94.0 55.0) scale(0.7500)"><g><path d="M4.6 8Q4.6 6.3 7 6.3H10.5V36H53V13Q53 11.5 55 11.5H57.5Q59.6 11.5 59.6 13.5V57Q59.6 59.4 57 59.4H7Q4.6 59.4 4.6 57Z" fill="#2f62a8" stroke="#0b1a33" stroke-width="2.2"/><path d="M11.4 3.7H43.1L52.5 13.1V40H11.4Z" fill="url(#ig)" stroke="#fff" stroke-width="0.8"/><path d="M43.1 3.7V13.1H52.5Z" fill="#b4b6b2"/><path d="M6 35.5H26.5L30.7 31.8H58.3V58H6Z" fill="url(#ib2)" stroke="#7aa7d8" stroke-width="1.2"/><path d="M14.5 36.5C19.2 21.9 29.6 16.2 41 19.8L46.8 23.5L54 18.8L55.1 39.1L33.2 38.6L39.5 32.3C33.8 27.1 25.4 26.1 17.1 36.5Z" fill="url(#ign)" stroke="#1c3a00" stroke-width="2" stroke-linejoin="round"/></g></g><g transform="translate(158.0 55.0) scale(0.7500)"><g><path d="M10.8 5.2H48.4L56.8 14.1V55.4Q56.8 58.4 53.8 58.4H10.8Q7.8 58.4 7.8 55.4V8.2Q7.8 5.2 10.8 5.2Z" fill="url(#isv)" stroke="#7c7e78" stroke-width="1.6"/><rect x="21.3" y="8.4" width="23.5" height="15.6" rx="2" fill="#eeeeec" stroke="#8a8c86" stroke-width="1.6"/><rect x="34.9" y="11.5" width="6.2" height="9.4" rx="1" fill="#2e3436"/><rect x="15.1" y="31.8" width="35" height="22.4" rx="2" fill="#fbfbfb" stroke="#8a8c86" stroke-width="1.6"/><path d="M18 34.6H47M18 38.2H47M18 41.8H47" stroke="#a0a29e" stroke-width="1.7"/><rect x="18.2" y="45.9" width="28.1" height="5.7" fill="#6c9cd6" stroke="#2a5aa0" stroke-width="1.5"/></g></g><g transform="translate(253.0 55.0) scale(0.7500)"><g><path d="M2.7 24.7L27.8 2V16.3C36 16 43.3 19.3 50 26C58 36 58 50 50.5 61.7C54 52 52.9 47.9 50 42C45.7 34.8 38 31 27.8 31.2V47.7Z" fill="url(#igu)" stroke="#9a9a9a" stroke-width="0.8"/><path d="M39.1 24.7H62.4L50.5 36.6Z" fill="#8a8a8a"/><path d="M39.1 24.2H62.4" stroke="#6e6e6e" stroke-width="1.2"/></g></g><g transform="translate(317.0 55.0) scale(0.7500)"><g><path d="M58.8 24.7L33.8 2V16.3C25 16 18.8 19.3 12 26C4 36 3.3 50 10.5 61.7C7.5 52 8.1 47.9 11 42C15.3 34.8 23 31 33.8 31.2V47.7Z" fill="url(#igu2)" stroke="#8c8c8c" stroke-width="0.8"/><path d="M39.1 24.7H62.4L50.5 36.6Z" fill="#8a8a8a"/><path d="M39.1 24.2H62.4" stroke="#6e6e6e" stroke-width="1.2"/></g></g><g transform="translate(398.0 55.0) scale(0.7500)"><g fill="url(#igu2)" stroke="#8c8c8c" stroke-width="0.8"><path d="M5.7 26.5C6 12 18 4 30 5C38 5.5 44 9 48 13L58.2 4.4V29.5H36.1L42 23C38 18 33 15 27 15C18 15 10 20 5.7 30Z"/><path d="M58.2 37.5C58 52 46 60 34 59C26 58.5 20 55 16 51L5.7 59.9V34.8H27.8L22 41C26 46 31 49 37 49C46 49 54 44 58.2 34Z"/></g></g><g transform="translate(750.0 55.0) scale(0.7500)"><g><path d="M37 38L57.5 56.6" stroke="#04383a" stroke-width="10.5" stroke-linecap="butt"/><path d="M36 37L56.6 55.8" stroke="#1fd0d4" stroke-width="6.6" stroke-linecap="butt"/><circle cx="23.7" cy="24" r="20" fill="url(#icr)" stroke="#04383a" stroke-width="2.4"/><circle cx="23.7" cy="24" r="17.6" fill="none" stroke="#4ee6ea" stroke-width="1.4" opacity="0.8"/><path d="M23.7 7L30.5 17.7H16.9ZM23.7 41L30.5 30.3H16.9ZM6.7 24L17.4 17.2V30.8ZM40.7 24L30 17.2V30.8Z" fill="#f0f0ee" stroke="#04383a" stroke-width="1"/><rect x="18.6" y="18.9" width="10.2" height="10.2" fill="#18c0c4" stroke="#04383a" stroke-width="0.8"/></g></g><g transform="translate(814.0 55.0) scale(0.7500)"><g><path d="M37 38L57.5 56.6" stroke="#04383a" stroke-width="10.5" stroke-linecap="butt"/><path d="M36 37L56.6 55.8" stroke="#1fd0d4" stroke-width="6.6" stroke-linecap="butt"/><circle cx="23.7" cy="24" r="20" fill="url(#icr)" stroke="#04383a" stroke-width="2.4"/><circle cx="23.7" cy="24" r="17.6" fill="none" stroke="#4ee6ea" stroke-width="1.4" opacity="0.8"/><path d="M8 34.5L25 17.5L19.5 12L39.5 7.5L35 27.5L29.5 22L12.5 39Z" fill="#f2f2f0" stroke="#04383a" stroke-width="1.6" stroke-linejoin="round"/></g></g><g transform="translate(878.0 55.0) scale(0.7500)"><path d="M32 5L58.8 16.6V45.4L32 58.6L4.6 45.4V16.6ZM4.6 16.6L32 29L58.8 16.6M32 29V58.6" fill="none" stroke="#04383a" stroke-width="5.4" stroke-linejoin="round"/><path d="M32 5L58.8 16.6V45.4L32 58.6L4.6 45.4V16.6ZM4.6 16.6L32 29L58.8 16.6M32 29V58.6" fill="none" stroke="#1fd3d6" stroke-width="2.7" stroke-linejoin="round"/><path d="M32 11V19M14 43.5L21 41M50 43.5L43 41" stroke="#04383a" stroke-width="4.4" stroke-linecap="round"/><path d="M32 11V19M14 43.5L21 41M50 43.5L43 41" stroke="#1fd3d6" stroke-width="2.2" stroke-linecap="round"/></g><g transform="translate(968.5 55.0) scale(0.7500)"><g><path d="M24.3 5.3L58.8 8.9V43.1L25.9 38.2Z" fill="#2adfe4" stroke="#04383a" stroke-width="1.8" stroke-linejoin="round"/><path d="M43 22.4L18.6 46.9" stroke="#04383a" stroke-width="6.4" stroke-dasharray="10 4.6"/><path d="M43 22.4L18.6 46.9" stroke="#2adfe4" stroke-width="3.2" stroke-dasharray="7.4 7.2" stroke-dashoffset="-1.3"/><path d="M5.6 59.1L10.4 42.8L22.7 53.4Z" fill="#2adfe4" stroke="#04383a" stroke-width="1.8" stroke-linejoin="round"/></g></g><g transform="translate(1049.7 55.0) scale(0.7500)"><g><path d="M32 2L60 17V47L32 62L4 47V17Z" fill="url(#ic)" stroke="#04383a" stroke-width="2.2" stroke-linejoin="round"/><path d="M32 5L57 18.5V45.5L32 59L7 45.5V18.5Z" fill="none" stroke="#5eeaec" stroke-width="1.2"/><circle cx="32" cy="32" r="20.5" fill="none" stroke="#3a0000" stroke-width="8.5"/><path d="M18.5 18L45.5 46" stroke="#3a0000" stroke-width="8.5"/><circle cx="32" cy="32" r="20.5" fill="none" stroke="#e01b1b" stroke-width="5.4"/><path d="M18.5 18L45.5 46" stroke="#e01b1b" stroke-width="5.4"/></g></g><g transform="translate(1139.7 55.0) scale(0.7500)"><g stroke-linejoin="round"><path d="M24.8 7.2L57.9 9.6V43.8L42.5 56.8L7.1 50.9V20.2Z" fill="#0e5e60" fill-opacity="0.55" stroke="#04383a" stroke-width="4.5"/><path d="M7.1 20.2L42.5 26.1V56.8L7.1 50.9Z" fill="#159a9c" fill-opacity="0.45"/><path d="M24.8 7.2L57.9 9.6V43.8L42.5 56.8L7.1 50.9V20.2ZM7.1 20.2L42.5 26.1L57.9 9.6M42.5 26.1V56.8M24.8 7.2V37.9L7.1 50.9M24.8 37.9L57.9 43.8" fill="none" stroke="#1fc4c7" stroke-width="2"/><path d="M16.5 31L40 43L32 46L40 57L35.5 59.5L28.5 48.5L23 54Z" fill="#f4f4f2" stroke="#222" stroke-width="1.8"/></g></g><g transform="translate(1230.3 55.0) scale(0.7500)"><g><path d="M37 38L57.5 56.6" stroke="#04383a" stroke-width="10.5" stroke-linecap="butt"/><path d="M36 37L56.6 55.8" stroke="#1fd0d4" stroke-width="6.6" stroke-linecap="butt"/><circle cx="23.7" cy="24" r="20" fill="url(#icr)" stroke="#04383a" stroke-width="2.4"/><circle cx="23.7" cy="24" r="17.6" fill="none" stroke="#4ee6ea" stroke-width="1.4" opacity="0.8"/><g fill="#f2f2f0" stroke="#04383a" stroke-width="1"><path d="M9.7 22C11.7 12 23.7 8 31.7 14L35.7 10L37.7 24L23.7 22L27.7 18C21.7 14 15.7 16 14.7 23Z"/><path d="M37.7 27C35.7 37 23.7 41 15.7 35L11.7 39L9.7 25L23.7 27L19.7 31C25.7 35 31.7 33 32.7 26Z"/></g></g></g><g transform="translate(1321.0 55.0) scale(0.7500)"><g stroke="#6a6c68" stroke-width="1"><rect x="27" y="3.6" width="13.5" height="56.8" fill="url(#icl)"/><path d="M8.7 11L27 8V15.5H22L8.7 13Z" fill="#e4e6e2"/><path d="M40.5 10L52.4 15.5L40.5 17.5Z" fill="#e4e6e2"/><path d="M24 23H44V35H24Z" fill="#d8dad6"/><path d="M8.7 28.5L24 26V32.5L8.7 30.5Z" fill="#e4e6e2"/><path d="M44 22.5L52.4 26.5L44 29.5Z" fill="#e4e6e2"/></g><path d="M29 38H35M29 41.5H33M29 45H35M29 48.5H33M29 52H35M29 55.5H33M30 26H38M30 30H36" stroke="#555753" stroke-width="1.4"/></g><g transform="translate(1414.0 55.0) scale(0.7500)"><g stroke="#302b00" stroke-width="1.8" stroke-linejoin="round"><path d="M9.1 36.7L23.2 27.3L42.2 23.7L54.9 29.6L36.5 44.3Z" fill="#fff27a"/><path d="M9.1 36.7L36.5 44.3L36.5 59.2L9.1 49Z" fill="url(#iy)"/><path d="M36.5 44.3L54.9 29.6L54.9 41.9L36.5 59.2Z" fill="#d6b808"/><path d="M10 22.1L29.4 5.1L42.2 10.7L23.2 27.3Z" fill="#fff27a"/><path d="M10 22.1L23.2 27.3L23.2 39.1L10 33.9Z" fill="url(#iy)"/><path d="M23.2 27.3L42.2 10.7L42.2 22.6L23.2 39.1Z" fill="#d6b808"/><path d="M23.2 39.1L36.5 44.3" fill="none"/></g><path d="M12.5 25.8L20.8 29V35.6L12.5 32.4ZM12 40.5L33.8 47V55.5L12 48.5Z" fill="none" stroke="#c4a000" stroke-width="1.2" opacity="0.8"/></g><g transform="translate(1478.0 55.0) scale(0.7500)"><g stroke="#0b1521" stroke-width="2.2" stroke-linejoin="round"><path d="M3.8 7Q3.8 4.8 6 4.8H24Q26 4.8 27.4 7L30 11.9H58Q60.5 11.9 60.5 14V22H3.8Z" fill="#2a5a9f"/><path d="M3.8 19H60.5V59.2H3.8Z" fill="url(#ib2)"/></g><path d="M5.6 20.6H58.7V57.4H5.6Z" fill="none" stroke="#86b2e0" stroke-width="1.1" opacity="0.7"/></g><g transform="translate(1542.5 55.0) scale(0.7500)"><g><path d="M26 9.5H15Q8 9.5 8 16.5V49Q8 56 15 56H43Q50 56 50 49V41" fill="none" stroke="#0b1521" stroke-width="8.4" stroke-linecap="round"/><path d="M26 9.5H15Q8 9.5 8 16.5V49Q8 56 15 56H43Q50 56 50 49V41" fill="none" stroke="#3b74bd" stroke-width="4.8" stroke-linecap="round"/><path d="M22 45C21 27 30 19 42 19V9L60 24L42 38V29C33 29 27 34 22 45Z" fill="url(#ign)" stroke="#1c3a00" stroke-width="2" stroke-linejoin="round"/></g></g><path d="M934.5 75H952.5L943.5 84Z" fill="#7a7a7a"/><path d="M934.5 74H952.5" stroke="#5a5a5a" stroke-width="1"/><path d="M1105.5 75H1123.5L1114.5 84Z" fill="#7a7a7a"/><path d="M1105.5 74H1123.5" stroke="#5a5a5a" stroke-width="1"/><path d="M1195.5 75H1213.5L1204.5 84Z" fill="#7a7a7a"/><path d="M1195.5 74H1213.5" stroke="#5a5a5a" stroke-width="1"/><path d="M1285.5 75H1303.5L1294.5 84Z" fill="#7a7a7a"/><path d="M1285.5 74H1303.5" stroke="#5a5a5a" stroke-width="1"/><path d="M1597 75H1615L1606 84Z" fill="#7a7a7a"/><path d="M1597 74H1615" stroke="#5a5a5a" stroke-width="1"/><rect x="11.1" y="64.80" width="2" height="2" fill="#767676"/><rect x="17.7" y="64.80" width="2" height="2" fill="#767676"/><rect x="11.1" y="70.45" width="2" height="2" fill="#767676"/><rect x="17.7" y="70.45" width="2" height="2" fill="#767676"/><rect x="11.1" y="76.10" width="2" height="2" fill="#767676"/><rect x="17.7" y="76.10" width="2" height="2" fill="#767676"/><rect x="11.1" y="81.75" width="2" height="2" fill="#767676"/><rect x="17.7" y="81.75" width="2" height="2" fill="#767676"/><rect x="11.1" y="87.40" width="2" height="2" fill="#767676"/><rect x="17.7" y="87.40" width="2" height="2" fill="#767676"/><rect x="11.1" y="93.05" width="2" height="2" fill="#767676"/><rect x="17.7" y="93.05" width="2" height="2" fill="#767676"/><rect x="233.6" y="64.80" width="2" height="2" fill="#767676"/><rect x="240.2" y="64.80" width="2" height="2" fill="#767676"/><rect x="233.6" y="70.45" width="2" height="2" fill="#767676"/><rect x="240.2" y="70.45" width="2" height="2" fill="#767676"/><rect x="233.6" y="76.10" width="2" height="2" fill="#767676"/><rect x="240.2" y="76.10" width="2" height="2" fill="#767676"/><rect x="233.6" y="81.75" width="2" height="2" fill="#767676"/><rect x="240.2" y="81.75" width="2" height="2" fill="#767676"/><rect x="233.6" y="87.40" width="2" height="2" fill="#767676"/><rect x="240.2" y="87.40" width="2" height="2" fill="#767676"/><rect x="233.6" y="93.05" width="2" height="2" fill="#767676"/><rect x="240.2" y="93.05" width="2" height="2" fill="#767676"/><rect x="473.6" y="64.80" width="2" height="2" fill="#767676"/><rect x="480.20000000000005" y="64.80" width="2" height="2" fill="#767676"/><rect x="473.6" y="70.45" width="2" height="2" fill="#767676"/><rect x="480.20000000000005" y="70.45" width="2" height="2" fill="#767676"/><rect x="473.6" y="76.10" width="2" height="2" fill="#767676"/><rect x="480.20000000000005" y="76.10" width="2" height="2" fill="#767676"/><rect x="473.6" y="81.75" width="2" height="2" fill="#767676"/><rect x="480.20000000000005" y="81.75" width="2" height="2" fill="#767676"/><rect x="473.6" y="87.40" width="2" height="2" fill="#767676"/><rect x="480.20000000000005" y="87.40" width="2" height="2" fill="#767676"/><rect x="473.6" y="93.05" width="2" height="2" fill="#767676"/><rect x="480.20000000000005" y="93.05" width="2" height="2" fill="#767676"/><rect x="731.6" y="64.80" width="2" height="2" fill="#767676"/><rect x="738.2" y="64.80" width="2" height="2" fill="#767676"/><rect x="731.6" y="70.45" width="2" height="2" fill="#767676"/><rect x="738.2" y="70.45" width="2" height="2" fill="#767676"/><rect x="731.6" y="76.10" width="2" height="2" fill="#767676"/><rect x="738.2" y="76.10" width="2" height="2" fill="#767676"/><rect x="731.6" y="81.75" width="2" height="2" fill="#767676"/><rect x="738.2" y="81.75" width="2" height="2" fill="#767676"/><rect x="731.6" y="87.40" width="2" height="2" fill="#767676"/><rect x="738.2" y="87.40" width="2" height="2" fill="#767676"/><rect x="731.6" y="93.05" width="2" height="2" fill="#767676"/><rect x="738.2" y="93.05" width="2" height="2" fill="#767676"/><rect x="1395.6" y="64.80" width="2" height="2" fill="#767676"/><rect x="1402.1999999999998" y="64.80" width="2" height="2" fill="#767676"/><rect x="1395.6" y="70.45" width="2" height="2" fill="#767676"/><rect x="1402.1999999999998" y="70.45" width="2" height="2" fill="#767676"/><rect x="1395.6" y="76.10" width="2" height="2" fill="#767676"/><rect x="1402.1999999999998" y="76.10" width="2" height="2" fill="#767676"/><rect x="1395.6" y="81.75" width="2" height="2" fill="#767676"/><rect x="1402.1999999999998" y="81.75" width="2" height="2" fill="#767676"/><rect x="1395.6" y="87.40" width="2" height="2" fill="#767676"/><rect x="1402.1999999999998" y="87.40" width="2" height="2" fill="#767676"/><rect x="1395.6" y="93.05" width="2" height="2" fill="#767676"/><rect x="1402.1999999999998" y="93.05" width="2" height="2" fill="#767676"/><rect x="380.2" y="61" width="3.5" height="38" fill="#5e5e5e"/><rect x="1031.8" y="61" width="3.5" height="38" fill="#5e5e5e"/><g transform="translate(496.5 64.0) scale(0.4844)"><g stroke="#0b1521" stroke-width="2.4" stroke-linejoin="round"><path d="M29.4 4.2L42.9 10.5L23.1 25.6L9.1 20.9Z" fill="#78a5d6"/><path d="M42.9 10.5V24L23.6 39.6L23.1 25.6Z" fill="#356aae"/><path d="M42.9 24L55.9 29.7L37.2 44.8L23.6 39.6Z" fill="#78a5d6"/><path d="M9.1 20.9L23.1 25.6L23.6 39.6L37.2 44.8V58.9L9.1 49Z" fill="url(#ib2)"/><path d="M37.2 44.8L55.9 29.7V41.7L37.2 58.9Z" fill="#3a6fb5"/></g><path d="M11.5 24.5L20.8 27.6L21.3 41.3L34.9 46.5" fill="none" stroke="#8ab4e2" stroke-width="1.3" opacity="0.8"/></g><path d="M676.5 76.3H690.5L683.5 83.3Z" fill="#8a8a8a"/><path d="M676.5 76H690.5" stroke="#6a6a6a" stroke-width="1"/><text x="1656" y="89" font-family="Liberation Sans, sans-serif" font-size="35" fill="#fff" text-anchor="middle" textLength="37" lengthAdjust="spacing">{}</text><g transform="translate(29.7 133.0) scale(0.7500)"><g stroke="#0b1521" stroke-width="2.4" stroke-linejoin="round"><path d="M29.4 4.2L42.9 10.5L23.1 25.6L9.1 20.9Z" fill="#78a5d6"/><path d="M42.9 10.5V24L23.6 39.6L23.1 25.6Z" fill="#356aae"/><path d="M42.9 24L55.9 29.7L37.2 44.8L23.6 39.6Z" fill="#78a5d6"/><path d="M9.1 20.9L23.1 25.6L23.6 39.6L37.2 44.8V58.9L9.1 49Z" fill="url(#ib2)"/><path d="M37.2 44.8L55.9 29.7V41.7L37.2 58.9Z" fill="#3a6fb5"/></g><path d="M11.5 24.5L20.8 27.6L21.3 41.3L34.9 46.5" fill="none" stroke="#8ab4e2" stroke-width="1.3" opacity="0.8"/></g><g transform="translate(94.0 133.0) scale(0.7500)"><g><path d="M7.7 3.7H56.5V50L46.8 60H7.7Z" fill="url(#ig)" stroke="#fff" stroke-width="0.8"/><path d="M46.8 60V50H56.5Z" fill="#9a9c98"/><circle cx="39.5" cy="25" r="13.8" fill="none" stroke="#e60a10" stroke-width="3.7"/><rect x="11.6" y="27.9" width="26.6" height="25.6" rx="1" fill="none" stroke="#e60a10" stroke-width="3.7"/></g></g><g transform="translate(185.0 133.0) scale(0.7500)"><g><path d="M5.1 2.5H56.5V61.5H5.1Z" fill="url(#ig)" stroke="#9c9c9c" stroke-width="2.2"/><circle cx="37.8" cy="24" r="12.8" fill="none" stroke="#a6a6a6" stroke-width="3.6"/><rect x="11" y="28.6" width="26.5" height="25.6" fill="#e4e4e4" stroke="#a6a6a6" stroke-width="3.6"/><circle cx="44" cy="43.4" r="16" fill="url(#igy2)" stroke="#a8a8a8" stroke-width="1.4"/><path d="M33 42L42 51L56.5 36.5" fill="none" stroke="#f6f6f6" stroke-width="4.4"/><path d="M33 42L42 51L56.5 36.5" fill="none" stroke="#9a9a9a" stroke-width="1"/></g></g><g transform="translate(248.0 133.0) scale(0.7500)"><g><path d="M30.9 8L11.4 56Q32 65.5 53.1 56Z" fill="url(#icn)" stroke="#0b1a33" stroke-width="2" stroke-linejoin="round"/><path d="M39 24L49.6 32.3" stroke="#7a4a02" stroke-width="6" stroke-linecap="round"/><path d="M39.5 24.5L49.2 32" stroke="#e9a63a" stroke-width="3.4" stroke-linecap="round"/><circle cx="30.9" cy="15.7" r="10.6" fill="#dfe8ee" fill-opacity="0.62" stroke="#9a9c98" stroke-width="3"/><circle cx="30.9" cy="15.7" r="11.4" fill="none" stroke="#d6d8d4" stroke-width="1.2"/><path d="M24 14A7.5 7.5 0 0 1 31 8.5" stroke="#fff" stroke-width="2.2" fill="none" opacity="0.8"/></g></g><g transform="translate(311.6 133.0) scale(0.7500)"><g><path d="M6.4 7.3Q12 4 17.6 5.25Q23 7 28.7 9.4Q35 7 41.2 4.6Q47 2.5 52.3 3.9Q60 5 60.6 11.5Q61 17 59.2 21.2Q55 27 49.5 30.9Q45 36 46.7 42Q49 48 52.3 53.2Q52 59 46.7 58.7Q39 58.5 32.8 57.3Q25 55 18.9 53.2Q12 52 6.4 50.4Q3.2 48 3.7 43.4Q4 30 4.4 18.4Q4 10 6.4 7.3Z" fill="url(#igb)" stroke="#1c3a06" stroke-width="2.2"/><circle cx="56.4" cy="8" r="4.7" fill="#ef2929" stroke="#3a0000" stroke-width="1.4"/><circle cx="8.5" cy="27.9" r="4.7" fill="#ef2929" stroke="#3a0000" stroke-width="1.4"/><circle cx="48.4" cy="55.7" r="4.7" fill="#ef2929" stroke="#3a0000" stroke-width="1.4"/></g></g><g transform="translate(375.5 133.0) scale(0.7500)"><g stroke="#0b1a33" stroke-width="2.2" stroke-linejoin="round"><path d="M13 24C6 30 1 38 2.5 45C9 43 15 36 17 28Z" fill="#f08010"/><path d="M47 24C54 30 59 37 57.5 44C51 42 45 35 43 27Z" fill="#fbb870"/><path d="M14 17C9 10 16 3 22 6C25 1 33 1 36 5C42 2 50 8 46 16C50 20 48 26 45 28C46 42 40 59.5 29.5 59.5C19 59.5 13 42 14 28C11 26 10 21 14 17Z" fill="url(#ior)"/><ellipse cx="29.5" cy="31.6" rx="11" ry="6.6" fill="#fff" stroke="none"/><circle cx="26.6" cy="31.8" r="3.1" fill="#0b1521" stroke="none"/><circle cx="33.2" cy="31.8" r="3.1" fill="#0b1521" stroke="none"/><path d="M24.5 50L29.5 54L34.5 50M29.5 54V58.5" fill="none" stroke-width="2"/></g></g><g transform="translate(440.0 133.0) scale(0.7500)"><g><path d="M36 8.4L56.1 27.3L27.8 55.7L7.7 36.3Z" fill="none" stroke="#0b1521" stroke-width="7.5" stroke-linejoin="round"/><path d="M36 8.4L56.1 27.3L27.8 55.7L7.7 36.3Z" fill="none" stroke="#3b74bd" stroke-width="4" stroke-linejoin="round"/><circle cx="36" cy="8.4" r="5.2" fill="#ef2929" stroke="#3a0000" stroke-width="1.4"/><circle cx="56.1" cy="27.3" r="5.2" fill="#ef2929" stroke="#3a0000" stroke-width="1.4"/><circle cx="27.8" cy="55.7" r="5.2" fill="#ef2929" stroke="#3a0000" stroke-width="1.4"/><circle cx="7.7" cy="36.3" r="5.2" fill="#ef2929" stroke="#3a0000" stroke-width="1.4"/></g></g><g transform="translate(560.0 133.0) scale(0.7500)"><g stroke-linejoin="round"><path d="M3.7 49.8L32.1 59.2L59.3 45L32 38Z" fill="none" stroke="#280000" stroke-width="6.5"/><path d="M3.7 49.8L32.1 59.2L59.3 45L32 38Z" fill="none" stroke="#ef2929" stroke-width="3.4"/><g stroke="#302b00" stroke-width="2"><path d="M4.9 17.8L32.1 5.5L59.3 15.5L32.1 27.3Z" fill="#fff48a"/><path d="M4.9 17.8L32.1 27.3V42.7L4.9 32Z" fill="url(#iy)"/><path d="M32.1 27.3L59.3 15.5V29.7L32.1 42.7Z" fill="#d9bd0a"/></g></g></g><g transform="translate(624.0 133.0) scale(0.7500)"><g stroke-linejoin="round"><path d="M2.2 52.1L61.3 11.2" stroke="#280000" stroke-width="6.5" stroke-linecap="round"/><path d="M2.2 52.1L61.3 11.2" stroke="#ef2929" stroke-width="3.4" stroke-linecap="round"/><path d="M3.4 22.6Q16.4 9 33 7.9L47.6 12.6Q62 25 59.4 41.5L33 59.2L21.2 54.5Q22 44 11.7 39.1Z" fill="url(#iy)" stroke="#302b00" stroke-width="2"/><path d="M3.4 22.6Q24 24 36 46L33 59.2L21.2 54.5Q22 44 11.7 39.1Z" fill="#dcc010" stroke="#302b00" stroke-width="1.6"/><path d="M8 30Q22 32 27 56" fill="none" stroke="#302b00" stroke-width="1.4"/><path d="M47.6 12.6Q40 14 36 46" fill="none" stroke="#302b00" stroke-width="1.2" opacity="0.6"/></g></g><g transform="translate(688.0 133.0) scale(0.7500)"><g stroke-linejoin="round"><path d="M8 29.7L23.3 12L55 17V56L23.3 53.3L8 51Z" fill="url(#iy)" stroke="#302b00" stroke-width="2"/><path d="M8 29.7L23.3 12L55 17L23.3 30.9Z" fill="#f2de38" stroke="#302b00" stroke-width="1.6"/><path d="M23.3 10.3L55.3 16.7V56.9" fill="none" stroke="#280000" stroke-width="6.5"/><path d="M23.3 10.3L55.3 16.7V56.9" fill="none" stroke="#ef2929" stroke-width="3.4"/><path d="M8 29.7L23.3 30.9V53.3L8 51Z" fill="none" stroke="#280000" stroke-width="6.5"/><path d="M8 29.7L23.3 30.9V53.3L8 51Z" fill="#f2de38" stroke="#ef2929" stroke-width="3.4"/></g></g><g transform="translate(752.0 133.0) scale(0.7500)"><g stroke-linejoin="round"><path d="M3 33.2Q10 16 23.1 6L48 11.9L59.8 39.1Q50 50 23.1 58V39.1Z" fill="url(#iy)" stroke="#302b00" stroke-width="2"/><path d="M23.1 39.1Q28 24 48 11.9" fill="none" stroke="#302b00" stroke-width="1.5"/><path d="M30 46Q44 42 52 30" fill="none" stroke="#f0a020" stroke-width="3.6" stroke-dasharray="7 6" stroke-linecap="round"/><path d="M20.8 4.8L48 11.9L59.8 39.1" fill="none" stroke="#280000" stroke-width="6.5"/><path d="M20.8 4.8L48 11.9L59.8 39.1" fill="none" stroke="#ef2929" stroke-width="3.4"/><path d="M3 33.2L23.1 39.1V58L3 52.1Z" fill="#e8cc10" stroke="#280000" stroke-width="6.5"/><path d="M3 33.2L23.1 39.1V58L3 52.1Z" fill="none" stroke="#ef2929" stroke-width="3.4"/><ellipse cx="10" cy="47.4" rx="4.6" ry="2.6" fill="#ef2929" stroke="#280000" stroke-width="1.4"/><ellipse cx="57.4" cy="7.2" rx="2.4" ry="3.4" transform="rotate(25 57.4 7.2)" fill="#ef2929" stroke="#280000" stroke-width="1.4"/></g></g><g transform="translate(816.0 133.0) scale(0.7500)"><g stroke-linejoin="round" fill="none" stroke-linecap="round"><path d="M30 22C28 10 44 4 48 12C50 20 40 24 36 22" stroke="#302b00" stroke-width="10"/><path d="M30 22C28 10 44 4 48 12C50 20 40 24 36 22" stroke="#d8bc08" stroke-width="6.5"/><path d="M4 58L59.5 10.8" stroke="#280000" stroke-width="6.5"/><path d="M4 58L59.5 10.8" stroke="#ef2929" stroke-width="3.4"/><path d="M46 26C58 30 54 46 38 48C20 50 12 34 24 28C34 24 44 30 42 38" stroke="#302b00" stroke-width="11"/><path d="M46 26C58 30 54 46 38 48C20 50 12 34 24 28C34 24 44 30 42 38" stroke="#f4e040" stroke-width="7.5"/><path d="M30 48C26 52 26 56 28 58" stroke="#302b00" stroke-width="9"/><path d="M30 48C26 52 26 56 28 58" stroke="#d8bc08" stroke-width="5.5"/><path d="M22 42.7L34 32.5" stroke="#280000" stroke-width="6.5"/><path d="M22 42.7L34 32.5" stroke="#ef2929" stroke-width="3.4"/></g></g><g transform="translate(880.0 133.0) scale(0.7500)"><g stroke-linejoin="round"><g stroke="#302b00" stroke-width="2"><path d="M7 15.5L29.5 8.4L56.7 12L37.8 19Z" fill="#fff48a"/><path d="M7 15.5L37.8 19V55.7L7 51Z" fill="#fde94a"/><path d="M37.8 19L56.7 12V46.2L37.8 55.7Z" fill="url(#iy2)"/></g><path d="M37.8 19V55.7M7.7 52.1L37.3 56.1L56.7 46.7" fill="none" stroke="#280000" stroke-width="6"/><path d="M37.8 19V55.7M7.7 52.1L37.3 56.1L56.7 46.7" fill="none" stroke="#ef2929" stroke-width="3"/><circle cx="37.8" cy="19" r="4.8" fill="#ef2929" stroke="#280000" stroke-width="1.4"/><circle cx="7.7" cy="52.1" r="4.8" fill="#ef2929" stroke="#280000" stroke-width="1.4"/><circle cx="37.3" cy="56.1" r="4.8" fill="#ef2929" stroke="#280000" stroke-width="1.4"/><circle cx="56.7" cy="46.7" r="4.8" fill="#ef2929" stroke="#280000" stroke-width="1.4"/></g></g><g transform="translate(988.0 133.0) scale(0.7500)"><g stroke="#0b1521" stroke-width="2" stroke-linejoin="round"><path d="M4 26L34 8L62 22L30 42Z" fill="#86b2e0"/><path d="M4 26L30 42V60L4 44Z" fill="url(#ib2)"/><path d="M30 42L62 22V40L30 60Z" fill="#3465a4"/><path d="M18 26L34 16L48 23L32 34Z" fill="#ef2929"/><path d="M18 26L34 16V24L24 30Z" fill="#a40000" stroke-width="1"/></g></g><g transform="translate(1052.0 133.0) scale(0.7500)"><g stroke="#0b1521" stroke-width="2" stroke-linejoin="round"><path d="M3.5 4.8L22.4 2.5L60.2 12L40.1 13.1Z" fill="#86b2e0"/><path d="M40.1 13.1L60.2 12V60.4L40.1 59.2Z" fill="url(#ib2)"/><path d="M3.5 4.8L40.1 13.1V59.2L3.5 51Z" fill="#5b8fd0"/><path d="M6 8L37.6 15.2V56L6 49Z" fill="none" stroke="#86b2e0" stroke-width="1.2"/><ellipse cx="22.4" cy="32" rx="14.5" ry="19" fill="url(#ir)" stroke="#280000" stroke-width="2"/><path d="M27 14.5A14.5 19 0 0 1 27 49.5A9 17 0 0 0 27 14.5Z" fill="#7c0000" stroke="none"/><ellipse cx="31" cy="32" rx="4.5" ry="12" fill="#5b8fd0" stroke="none"/></g></g><g transform="translate(1117.0 133.0) scale(0.7500)"><g stroke-linejoin="round"><path d="M42 24L58.7 12" stroke="#280000" stroke-width="6.5" stroke-linecap="round"/><path d="M42 24L58.7 12" stroke="#ef2929" stroke-width="3.4" stroke-linecap="round"/><path d="M25.6 17.8Q27 10 32.6 7.2Q44 5 51.6 10.8Q60 20 59.8 29.7L57.5 39.1L42.1 41.5Q38 28 25.6 17.8Z" fill="url(#ir)" stroke="#280000" stroke-width="2"/><path d="M32.6 7.2Q46 16 51 36M40 6.8Q52 16 57.5 39.1" fill="none" stroke="#280000" stroke-width="1.3" opacity="0.7"/><path d="M1.9 52.1L24 36.5" stroke="#280000" stroke-width="6.5" stroke-linecap="round"/><path d="M1.9 52.1L24 36.5" stroke="#ef2929" stroke-width="3.4" stroke-linecap="round"/><path d="M1.9 22.6Q8 17 16.1 15.5L25.6 17.8Q40 28 42.1 41.5L40.9 53.3L32.6 59.2L27.9 58Q28 48 23.2 41.5Q18 34 4.3 29.7Z" fill="url(#ib)" stroke="#0b1521" stroke-width="2"/><path d="M8 19.5Q28 26 34.5 57.5M16.1 15.5Q36 26 40.9 53.3" fill="none" stroke="#0b1521" stroke-width="1.3" opacity="0.75"/><path d="M4.3 29.7Q10 24 1.9 22.6" fill="none" stroke="#0b1521" stroke-width="1.3"/></g></g><g transform="translate(1180.0 133.0) scale(0.7500)"><g stroke-linejoin="round"><path d="M8 29.7L23.3 12L55 17V56L23.3 53.3L8 51Z" fill="url(#ir)" stroke="#280000" stroke-width="2"/><path d="M8 29.7L23.3 12L55 17L23.3 30.9Z" fill="#d81818" stroke="#280000" stroke-width="1.6"/><path d="M23.3 10.3L55.3 16.7V56.9" fill="none" stroke="#0b1521" stroke-width="6.5"/><path d="M23.3 10.3L55.3 16.7V56.9" fill="none" stroke="#5b8fd0" stroke-width="3.4"/><path d="M8 29.7L23.3 30.9V53.3L8 51Z" fill="none" stroke="#0b1521" stroke-width="6.5"/><path d="M8 29.7L23.3 30.9V53.3L8 51Z" fill="#d81818" stroke="#5b8fd0" stroke-width="3.4"/></g></g><g transform="translate(1243.6 133.0) scale(0.7500)"><g stroke-linejoin="round"><path d="M3 33.2Q10 16 23.1 6L48 11.9L59.8 39.1Q50 50 23.1 58V39.1Z" fill="url(#ir)" stroke="#280000" stroke-width="2"/><path d="M23.1 39.1Q28 24 48 11.9" fill="none" stroke="#280000" stroke-width="1.5"/><path d="M30 46Q44 42 52 30" fill="none" stroke="#e05050" stroke-width="3.6" stroke-dasharray="7 6" stroke-linecap="round"/><path d="M20.8 4.8L48 11.9L59.8 39.1" fill="none" stroke="#0b1521" stroke-width="6.5"/><path d="M20.8 4.8L48 11.9L59.8 39.1" fill="none" stroke="#5b8fd0" stroke-width="3.4"/><path d="M3 33.2L23.1 39.1V58L3 52.1Z" fill="#c01010" stroke="#0b1521" stroke-width="6.5"/><path d="M3 33.2L23.1 39.1V58L3 52.1Z" fill="none" stroke="#5b8fd0" stroke-width="3.4"/><ellipse cx="10" cy="47.4" rx="4.6" ry="2.6" fill="#5b8fd0" stroke="#0b1521" stroke-width="1.4"/><ellipse cx="57.4" cy="7.2" rx="2.4" ry="3.4" transform="rotate(25 57.4 7.2)" fill="#5b8fd0" stroke="#0b1521" stroke-width="1.4"/></g></g><g transform="translate(1307.8 133.0) scale(0.7500)"><g stroke-linejoin="round" fill="none" stroke-linecap="round"><path d="M30 22C28 10 44 4 48 12C50 20 40 24 36 22" stroke="#0b1521" stroke-width="10"/><path d="M30 22C28 10 44 4 48 12C50 20 40 24 36 22" stroke="#2f62a8" stroke-width="6.5"/><path d="M4 58L59.5 10.8" stroke="#280000" stroke-width="6.5"/><path d="M4 58L59.5 10.8" stroke="#ef2929" stroke-width="3.4"/><path d="M46 26C58 30 54 46 38 48C20 50 12 34 24 28C34 24 44 30 42 38" stroke="#0b1521" stroke-width="11"/><path d="M46 26C58 30 54 46 38 48C20 50 12 34 24 28C34 24 44 30 42 38" stroke="#5b8fd0" stroke-width="7.5"/><path d="M30 48C26 52 26 56 28 58" stroke="#0b1521" stroke-width="9"/><path d="M30 48C26 52 26 56 28 58" stroke="#2f62a8" stroke-width="5.5"/><path d="M22 42.7L34 32.5" stroke="#280000" stroke-width="6.5"/><path d="M22 42.7L34 32.5" stroke="#ef2929" stroke-width="3.4"/></g></g><g transform="translate(1371.6 133.0) scale(0.7500)"><g stroke-linejoin="round"><g stroke="#280000" stroke-width="2"><path d="M7 15.5L29.5 8.4L56.7 12L37.8 19Z" fill="#f23a3a"/><path d="M7 15.5L37.8 19V55.7L7 51Z" fill="#ea2222"/><path d="M37.8 19L56.7 12V46.2L37.8 55.7Z" fill="url(#ir)"/></g><path d="M37.8 19V55.7M7.7 52.1L37.3 56.1L56.7 46.7" fill="none" stroke="#0b1521" stroke-width="6"/><path d="M37.8 19V55.7M7.7 52.1L37.3 56.1L56.7 46.7" fill="none" stroke="#5b8fd0" stroke-width="3"/><circle cx="37.8" cy="19" r="4.8" fill="#5b8fd0" stroke="#0b1521" stroke-width="1.4"/><circle cx="7.7" cy="52.1" r="4.8" fill="#5b8fd0" stroke="#0b1521" stroke-width="1.4"/><circle cx="37.3" cy="56.1" r="4.8" fill="#5b8fd0" stroke="#0b1521" stroke-width="1.4"/><circle cx="56.7" cy="46.7" r="4.8" fill="#5b8fd0" stroke="#0b1521" stroke-width="1.4"/></g></g><g transform="translate(1479.5 133.0) scale(0.7500)"><g stroke="#0b1521" stroke-width="2"><circle cx="42" cy="22" r="18" fill="#5b8fd0"/><circle cx="24" cy="40" r="20" fill="url(#isp)"/></g></g><g transform="translate(1574.0 133.0) scale(0.7500)"><g stroke="#0b1521" stroke-width="2" stroke-linejoin="round"><path d="M3.5 39.1L30.7 47.4V59.2L3.5 49.7Z" fill="#5b8fd0"/><path d="M51.9 17.8L60.2 16.7V42.7L30.7 59.2V47.4Q31 26 51.9 17.8Z" fill="url(#ib2)"/><path d="M25.9 8.4L34.2 4.8L60.2 16.7L51.9 17.8Z" fill="#86b2e0"/><path d="M3.5 39.1Q4 18 25.9 8.4L51.9 17.8Q31 26 30.7 47.4Z" fill="url(#irf)" stroke="#280000"/><path d="M6.5 41.8L28 48.4V55.5L6.5 48Z" fill="none" stroke="#86b2e0" stroke-width="1.1"/></g></g><g transform="translate(1638.0 133.0) scale(0.7500)"><g stroke="#0b1521" stroke-width="2" stroke-linejoin="round"><path d="M3.3 39.1L30.5 47.4V59.2L3.3 49.7Z" fill="#5b8fd0"/><path d="M49.4 19L60 16.7V42.7L30.5 59.2V47.4Z" fill="url(#ib2)"/><path d="M23.4 10.7L34 5.5L60 16.7L49.4 19Z" fill="#86b2e0"/><path d="M3.3 39.1L23.4 10.7L49.4 19L30.5 47.4Z" fill="url(#irf)" stroke="#280000"/><path d="M6.5 41.8L28 48.4V55.5L6.5 48Z" fill="none" stroke="#86b2e0" stroke-width="1.1"/></g></g><g transform="translate(1702.0 133.0) scale(0.7500)"><g stroke-linejoin="round"><path d="M28.9 3.5L60.8 13.4V45.3L32.5 60.2L3.4 46.5V14.6Z" fill="#20242a" stroke="#0b1521" stroke-width="2"/><path d="M28.9 5L57 13.6L32.5 24.5L7 14.8Z" fill="#78a5d6"/><path d="M13.5 18.2L54.9 13.4L33.6 25.3Z" fill="#ef2929" stroke="#280000" stroke-width="1.2"/><path d="M13.5 21.7L31.3 28.8V48.9L15.9 45.3Z" fill="url(#ir)" stroke="#280000" stroke-width="1.2"/><path d="M34.8 28.8L59.6 18.2V39.4L34.8 46.5Z" fill="url(#ir)" stroke="#280000" stroke-width="1.2"/><path d="M28.9 3.5L60.8 13.4V45.3L32.5 60.2L3.4 46.5V14.6ZM3.4 14.6L32.5 26.4L60.8 13.4M32.5 26.4V60.2" fill="none" stroke="#0b1521" stroke-width="6"/><path d="M28.9 3.5L60.8 13.4V45.3L32.5 60.2L3.4 46.5V14.6ZM3.4 14.6L32.5 26.4L60.8 13.4M32.5 26.4V60.2" fill="none" stroke="#6c9bd2" stroke-width="3"/><path d="M28.9 3.5L60.8 13.4L32.5 26.4L3.4 14.6Z" fill="#86b2e0" fill-opacity="0.0"/></g></g><g transform="translate(1766.5 133.0) scale(0.7500)"><g stroke="#0b1521" stroke-width="2" stroke-linejoin="round"><path d="M11.5 8.7L30.4 2.8L59.9 12.2V45.3L32.7 60.2L3.2 51.3Z" fill="#5b8fd0"/><path d="M37.5 48.9L59.9 45.3L32.7 60.2L3.2 51.3L15 44.2Z" fill="#3b74bd"/><path d="M22.1 12.2L30.4 9.9V38.3L15 44.2Z" fill="#c00808" stroke="#280000" stroke-width="1.3"/><path d="M30.4 9.9L52.8 15.8V41.8L30.4 38.3Z" fill="url(#ir)" stroke="#280000" stroke-width="1.3"/><path d="M15 44.2L30.4 38.3L52.8 41.8L37.5 48.9Z" fill="#f03030" stroke="#280000" stroke-width="1.3"/></g></g><g transform="translate(1860.0 133.0) scale(0.7500)"><g stroke="#0b1521" stroke-width="2" stroke-linejoin="round"><path d="M3.6 60.2V35.9L47.3 6.3L60.3 11.1V60.2Z" fill="url(#ibs)"/><path d="M3.6 48L34 60.2M3.6 53L20 60.2" fill="none" stroke-width="1.5"/></g><g stroke="#0b1521" stroke-width="1.8" stroke-linejoin="round"><path d="M13.3 11.1Q14 5 19.2 4.5L33.4 16V32L22 38L13.3 30Z" fill="#5b8fd0"/><path d="M19.2 4.5Q24 8 22 15V38L13.3 30V11.1Q14 5 19.2 4.5Z" fill="#3465a4"/></g><path d="M6.2 53.6L60.5 21.7" stroke="#3a0000" stroke-width="6" stroke-dasharray="9 9" stroke-linecap="round"/><path d="M6.2 53.6L60.5 21.7" stroke="#ef2929" stroke-width="3.6" stroke-dasharray="9 9" stroke-linecap="round"/><g stroke="#302b00" stroke-width="1.8" stroke-linejoin="round"><path d="M31 30V47A15 5.5 0 0 0 61 47V30Z" fill="url(#iyc)"/><path d="M31 30L45.2 20.5L61 30A15 5 0 0 1 31 30Z" fill="#fff27a"/></g></g><g transform="translate(1924.0 133.0) scale(0.7500)"><g stroke="#0b1521" stroke-width="2" stroke-linejoin="round"><path d="M3.6 60.2V35.9L47.3 6.3L60.3 11.1V60.2Z" fill="url(#ibs)"/><path d="M3.6 48L34 60.2M3.6 53L20 60.2" fill="none" stroke-width="1.5"/></g><g stroke="#0b1521" stroke-width="1.6" stroke-linejoin="round"><path d="M11.9 24.299999999999997L19.9 28.299999999999997L11.9 32.3L3.9000000000000004 28.299999999999997Z" fill="#86b2e0"/><path d="M3.9000000000000004 28.299999999999997L11.9 32.3V40.3L3.9000000000000004 36.3Z" fill="#3b74bd"/><path d="M19.9 28.299999999999997L11.9 32.3V40.3L19.9 36.3Z" fill="#204a87"/></g><g stroke="#302b00" stroke-width="1.6" stroke-linejoin="round"><path d="M32 23.4L40.5 27.65L32 31.9L23.5 27.65Z" fill="#fff48a"/><path d="M23.5 27.65L32 31.9V40.4L23.5 36.15Z" fill="url(#iy)"/><path d="M40.5 27.65L32 31.9V40.4L40.5 36.15Z" fill="#c8a800"/></g><g stroke="#302b00" stroke-width="1.6" stroke-linejoin="round"><path d="M52 23.4L60.5 27.65L52 31.9L43.5 27.65Z" fill="#fff48a"/><path d="M43.5 27.65L52 31.9V40.4L43.5 36.15Z" fill="url(#iy)"/><path d="M60.5 27.65L52 31.9V40.4L60.5 36.15Z" fill="#c8a800"/></g></g><g transform="translate(1988.0 133.0) scale(0.7500)"><g stroke="#0b1521" stroke-width="2" stroke-linejoin="round"><path d="M3.6 60.2V35.9L47.3 6.3L60.3 11.1V60.2Z" fill="url(#ibs)"/><path d="M3.6 48L34 60.2M3.6 53L20 60.2" fill="none" stroke-width="1.5"/></g><g stroke="#302b00" stroke-width="1.6" stroke-linejoin="round"><path d="M34.1 10.7L41.6 14.45L34.1 18.2L26.6 14.45Z" fill="#fff48a"/><path d="M26.6 14.45L34.1 18.2V25.7L26.6 21.95Z" fill="url(#iy)"/><path d="M41.6 14.45L34.1 18.2V25.7L41.6 21.95Z" fill="#c8a800"/></g><g stroke="#302b00" stroke-width="1.6" stroke-linejoin="round"><path d="M50.7 14.899999999999999L58.2 18.65L50.7 22.4L43.2 18.65Z" fill="#fff48a"/><path d="M43.2 18.65L50.7 22.4V29.9L43.2 26.15Z" fill="url(#iy)"/><path d="M58.2 18.65L50.7 22.4V29.9L58.2 26.15Z" fill="#c8a800"/></g><g stroke="#302b00" stroke-width="1.6" stroke-linejoin="round"><path d="M18.8 20.1L26.3 23.85L18.8 27.6L11.3 23.85Z" fill="#fff48a"/><path d="M11.3 23.85L18.8 27.6V35.1L11.3 31.35Z" fill="url(#iy)"/><path d="M26.3 23.85L18.8 27.6V35.1L26.3 31.35Z" fill="#c8a800"/></g><g stroke="#302b00" stroke-width="1.6" stroke-linejoin="round"><path d="M51.9 28.4L59.4 32.15L51.9 35.9L44.4 32.15Z" fill="#fff48a"/><path d="M44.4 32.15L51.9 35.9V43.4L44.4 39.65Z" fill="url(#iy)"/><path d="M59.4 32.15L51.9 35.9V43.4L59.4 39.65Z" fill="#c8a800"/></g><g stroke="#0b1521" stroke-width="1.6" stroke-linejoin="round"><path d="M18.8 31.599999999999998L26.6 35.5L18.8 39.4L11.0 35.5Z" fill="#86b2e0"/><path d="M11.0 35.5L18.8 39.4V47.199999999999996L11.0 43.3Z" fill="#3b74bd"/><path d="M26.6 35.5L18.8 39.4V47.199999999999996L26.6 43.3Z" fill="#204a87"/></g><g stroke="#302b00" stroke-width="1.6" stroke-linejoin="round"><path d="M35.3 35.900000000000006L43.099999999999994 39.800000000000004L35.3 43.7L27.499999999999996 39.800000000000004Z" fill="#fff48a"/><path d="M27.499999999999996 39.800000000000004L35.3 43.7V51.5L27.499999999999996 47.6Z" fill="url(#iy)"/><path d="M43.099999999999994 39.800000000000004L35.3 43.7V51.5L43.099999999999994 47.6Z" fill="#c8a800"/></g></g><g transform="translate(2052.0 133.0) scale(0.7500)"><g stroke="#0b1521" stroke-width="2" stroke-linejoin="round"><path d="M3.6 60.2V35.9L47.3 6.3L60.3 11.1V60.2Z" fill="url(#ibs)"/><path d="M3.6 48L34 60.2M3.6 53L20 60.2" fill="none" stroke-width="1.5"/></g><g stroke="#302b00" stroke-width="1.6" stroke-linejoin="round"><path d="M40.9 0.8000000000000007L59.4 10.05L40.9 19.3L22.4 10.05Z" fill="#fff48a"/><path d="M22.4 10.05L40.9 19.3V37.8L22.4 28.55Z" fill="url(#iy)"/><path d="M59.4 10.05L40.9 19.3V37.8L59.4 28.55Z" fill="#c8a800"/></g><g stroke="#302b00" stroke-width="1.6" stroke-linejoin="round"><path d="M16.6 10.2L24.6 14.2L16.6 18.2L8.600000000000001 14.2Z" fill="#fff48a"/><path d="M8.600000000000001 14.2L16.6 18.2V26.2L8.600000000000001 22.2Z" fill="url(#iy)"/><path d="M24.6 14.2L16.6 18.2V26.2L24.6 22.2Z" fill="#c8a800"/></g><g stroke="#0b1521" stroke-width="1.6" stroke-linejoin="round"><path d="M25.6 35.7L33.6 39.7L25.6 43.7L17.6 39.7Z" fill="#86b2e0"/><path d="M17.6 39.7L25.6 43.7V51.7L17.6 47.7Z" fill="#3b74bd"/><path d="M33.6 39.7L25.6 43.7V51.7L33.6 47.7Z" fill="#204a87"/></g><g stroke="#302b00" stroke-width="1.6" stroke-linejoin="round"><path d="M48 31.700000000000003L60 37.7L48 43.7L36 37.7Z" fill="#fff48a"/><path d="M36 37.7L48 43.7V55.7L36 49.7Z" fill="url(#iy)"/><path d="M60 37.7L48 43.7V55.7L60 49.7Z" fill="#c8a800"/></g></g><path d="M149.6 153H167.6L158.6 162Z" fill="#7a7a7a"/><path d="M149.6 152H167.6" stroke="#5a5a5a" stroke-width="1"/><path d="M496 153H514L505 162Z" fill="#7a7a7a"/><path d="M496 152H514" stroke="#5a5a5a" stroke-width="1"/><path d="M935.5 153H953.5L944.5 162Z" fill="#7a7a7a"/><path d="M935.5 152H953.5" stroke="#5a5a5a" stroke-width="1"/><path d="M1427 153H1445L1436 162Z" fill="#7a7a7a"/><path d="M1427 152H1445" stroke="#5a5a5a" stroke-width="1"/><rect x="11.1" y="142.80" width="2" height="2" fill="#767676"/><rect x="17.7" y="142.80" width="2" height="2" fill="#767676"/><rect x="11.1" y="148.45" width="2" height="2" fill="#767676"/><rect x="17.7" y="148.45" width="2" height="2" fill="#767676"/><rect x="11.1" y="154.10" width="2" height="2" fill="#767676"/><rect x="17.7" y="154.10" width="2" height="2" fill="#767676"/><rect x="11.1" y="159.75" width="2" height="2" fill="#767676"/><rect x="17.7" y="159.75" width="2" height="2" fill="#767676"/><rect x="11.1" y="165.40" width="2" height="2" fill="#767676"/><rect x="17.7" y="165.40" width="2" height="2" fill="#767676"/><rect x="11.1" y="171.05" width="2" height="2" fill="#767676"/><rect x="17.7" y="171.05" width="2" height="2" fill="#767676"/><rect x="541.6" y="142.80" width="2" height="2" fill="#767676"/><rect x="548.2" y="142.80" width="2" height="2" fill="#767676"/><rect x="541.6" y="148.45" width="2" height="2" fill="#767676"/><rect x="548.2" y="148.45" width="2" height="2" fill="#767676"/><rect x="541.6" y="154.10" width="2" height="2" fill="#767676"/><rect x="548.2" y="154.10" width="2" height="2" fill="#767676"/><rect x="541.6" y="159.75" width="2" height="2" fill="#767676"/><rect x="548.2" y="159.75" width="2" height="2" fill="#767676"/><rect x="541.6" y="165.40" width="2" height="2" fill="#767676"/><rect x="548.2" y="165.40" width="2" height="2" fill="#767676"/><rect x="541.6" y="171.05" width="2" height="2" fill="#767676"/><rect x="548.2" y="171.05" width="2" height="2" fill="#767676"/><rect x="1553.6" y="142.80" width="2" height="2" fill="#767676"/><rect x="1560.1999999999998" y="142.80" width="2" height="2" fill="#767676"/><rect x="1553.6" y="148.45" width="2" height="2" fill="#767676"/><rect x="1560.1999999999998" y="148.45" width="2" height="2" fill="#767676"/><rect x="1553.6" y="154.10" width="2" height="2" fill="#767676"/><rect x="1560.1999999999998" y="154.10" width="2" height="2" fill="#767676"/><rect x="1553.6" y="159.75" width="2" height="2" fill="#767676"/><rect x="1560.1999999999998" y="159.75" width="2" height="2" fill="#767676"/><rect x="1553.6" y="165.40" width="2" height="2" fill="#767676"/><rect x="1560.1999999999998" y="165.40" width="2" height="2" fill="#767676"/><rect x="1553.6" y="171.05" width="2" height="2" fill="#767676"/><rect x="1560.1999999999998" y="171.05" width="2" height="2" fill="#767676"/><rect x="1841.6" y="142.80" width="2" height="2" fill="#767676"/><rect x="1848.1999999999998" y="142.80" width="2" height="2" fill="#767676"/><rect x="1841.6" y="148.45" width="2" height="2" fill="#767676"/><rect x="1848.1999999999998" y="148.45" width="2" height="2" fill="#767676"/><rect x="1841.6" y="154.10" width="2" height="2" fill="#767676"/><rect x="1848.1999999999998" y="154.10" width="2" height="2" fill="#767676"/><rect x="1841.6" y="159.75" width="2" height="2" fill="#767676"/><rect x="1848.1999999999998" y="159.75" width="2" height="2" fill="#767676"/><rect x="1841.6" y="165.40" width="2" height="2" fill="#767676"/><rect x="1848.1999999999998" y="165.40" width="2" height="2" fill="#767676"/><rect x="1841.6" y="171.05" width="2" height="2" fill="#767676"/><rect x="1848.1999999999998" y="171.05" width="2" height="2" fill="#767676"/><rect x="970.2" y="139" width="3.5" height="38" fill="#5e5e5e"/><rect x="1461.2" y="139" width="3.5" height="38" fill="#5e5e5e"/><path d="M11.5 243.5H31.5L21.5 254Z" fill="#222"/><path d="M13 245H31L22 254Z" fill="#f4f4f4"/><g transform="translate(48.0 233.0) scale(0.5000)"><g><path d="M10 2H44L54 12V62H10Z" fill="url(#ig)" stroke="#1a1a1a" stroke-width="3"/><path d="M44 2V12H54Z" fill="#9a9a9a"/><circle cx="39" cy="24" r="11.5" fill="#e01b1b" stroke="#3a0000" stroke-width="1.5"/><g stroke="#0b1521" stroke-width="2" stroke-linejoin="round"><path d="M28 24.5L42.5 31.75L28 39L13.5 31.75Z" fill="#86b2e0"/><path d="M13.5 31.75L28 39V53.5L13.5 46.25Z" fill="#3b74bd"/><path d="M42.5 31.75L28 39V53.5L42.5 46.25Z" fill="#2a5a9f"/></g></g></g><path d="M51.5 279.5H71.5L61.5 290Z" fill="#222"/><path d="M53 281H71L62 290Z" fill="#f4f4f4"/><g transform="translate(90.5 272.5) scale(0.4219)"><g><path d="M3 32C15 11 49 11 61 32C49 53 15 53 3 32Z" fill="#fff" stroke="#111" stroke-width="9"/><circle cx="32" cy="32" r="12.5" fill="#111"/><circle cx="27" cy="27" r="4.5" fill="#fff"/></g></g><g filter="url(#ol)"><g transform="translate(127.5 270.0) scale(0.4688)"><g stroke="#0b1521" stroke-width="2.4" stroke-linejoin="round"><path d="M29.4 4.2L42.9 10.5L23.1 25.6L9.1 20.9Z" fill="#78a5d6"/><path d="M42.9 10.5V24L23.6 39.6L23.1 25.6Z" fill="#356aae"/><path d="M42.9 24L55.9 29.7L37.2 44.8L23.6 39.6Z" fill="#78a5d6"/><path d="M9.1 20.9L23.1 25.6L23.6 39.6L37.2 44.8V58.9L9.1 49Z" fill="url(#ib2)"/><path d="M37.2 44.8L55.9 29.7V41.7L37.2 58.9Z" fill="#3a6fb5"/></g><path d="M11.5 24.5L20.8 27.6L21.3 41.3L34.9 46.5" fill="none" stroke="#8ab4e2" stroke-width="1.3" opacity="0.8"/></g></g><path d="M95.5 312.5L105.5 322L95.5 331.5Z" fill="#222"/><path d="M97.0 314.2L106.0 322L97.0 329.8Z" fill="#f6f6f6"/><path d="M95.5 348.5L105.5 358L95.5 367.5Z" fill="#222"/><path d="M97.0 350.2L106.0 358L97.0 365.8Z" fill="#f6f6f6"/><path d="M95.5 384.5L105.5 394L95.5 403.5Z" fill="#222"/><path d="M97.0 386.2L106.0 394L97.0 401.8Z" fill="#f6f6f6"/><path d="M95.5 456.5L105.5 466L95.5 475.5Z" fill="#222"/><path d="M97.0 458.2L106.0 466L97.0 473.8Z" fill="#f6f6f6"/><path d="M95.5 528.5L105.5 538L95.5 547.5Z" fill="#222"/><path d="M97.0 530.2L106.0 538L97.0 545.8Z" fill="#f6f6f6"/><path d="M95.5 600.5L105.5 610L95.5 619.5Z" fill="#222"/><path d="M97.0 602.2L106.0 610L97.0 617.8Z" fill="#f6f6f6"/><path d="M95.5 708.5L105.5 718L95.5 727.5Z" fill="#222"/><path d="M97.0 710.2L106.0 718L97.0 725.8Z" fill="#f6f6f6"/><g filter="url(#ol)"><g transform="translate(129.0 307.0) scale(0.4688)"><g><ellipse cx="32" cy="32" rx="24" ry="11.5" fill="#9a9a9a"/><ellipse cx="32" cy="32" rx="18" ry="7.6" fill="#d6d6d6"/><ellipse cx="32" cy="32" rx="8" ry="5.2" fill="#9a9a9a"/><path d="M10 6L55.2 56.7" stroke="#222" stroke-width="10" stroke-linecap="butt"/><path d="M10 6L55.2 56.7" stroke="#ececec" stroke-width="4.4" stroke-linecap="butt"/></g></g><g transform="translate(166.0 306.0) scale(0.5000)"><g stroke-linecap="butt" fill="none" stroke="#a8a8a8" stroke-width="7"><path d="M30.4 0V32H63M30.4 32L7.6 54.8"/></g><circle cx="30.4" cy="32" r="4" fill="#8c8c8c"/></g><g transform="translate(129.0 343.0) scale(0.4688)"><g><ellipse cx="32" cy="32" rx="24" ry="11.5" fill="#9a9a9a"/><ellipse cx="32" cy="32" rx="18" ry="7.6" fill="#d6d6d6"/><ellipse cx="32" cy="32" rx="8" ry="5.2" fill="#9a9a9a"/><path d="M10 6L55.2 56.7" stroke="#222" stroke-width="10" stroke-linecap="butt"/><path d="M10 6L55.2 56.7" stroke="#ececec" stroke-width="4.4" stroke-linecap="butt"/></g></g><g transform="translate(166.0 342.0) scale(0.5000)"><g stroke-linejoin="round"><path d="M3.7 49.8L32.1 59.2L59.3 45L32 38Z" fill="none" stroke="#2c2c2c" stroke-width="6.5"/><path d="M3.7 49.8L32.1 59.2L59.3 45L32 38Z" fill="none" stroke="#b0b0b0" stroke-width="3.4"/><g stroke="#2c2c2c" stroke-width="2"><path d="M4.9 17.8L32.1 5.5L59.3 15.5L32.1 27.3Z" fill="#e8e8e8"/><path d="M4.9 17.8L32.1 27.3V42.7L4.9 32Z" fill="url(#igy)"/><path d="M32.1 27.3L59.3 15.5V29.7L32.1 42.7Z" fill="#a0a0a0"/></g></g></g><g transform="translate(129.0 379.0) scale(0.4688)"><g><ellipse cx="32" cy="32" rx="24" ry="11.5" fill="#9a9a9a"/><ellipse cx="32" cy="32" rx="18" ry="7.6" fill="#d6d6d6"/><ellipse cx="32" cy="32" rx="8" ry="5.2" fill="#9a9a9a"/><path d="M10 6L55.2 56.7" stroke="#222" stroke-width="10" stroke-linecap="butt"/><path d="M10 6L55.2 56.7" stroke="#ececec" stroke-width="4.4" stroke-linecap="butt"/></g></g><g transform="translate(166.0 378.0) scale(0.5000)"><g stroke-linejoin="round"><path d="M42 24L58.7 12" stroke="#2c2c2c" stroke-width="6.5" stroke-linecap="round"/><path d="M42 24L58.7 12" stroke="#b8b8b8" stroke-width="3.4" stroke-linecap="round"/><path d="M25.6 17.8Q27 10 32.6 7.2Q44 5 51.6 10.8Q60 20 59.8 29.7L57.5 39.1L42.1 41.5Q38 28 25.6 17.8Z" fill="url(#igy2)" stroke="#2c2c2c" stroke-width="2"/><path d="M32.6 7.2Q46 16 51 36M40 6.8Q52 16 57.5 39.1" fill="none" stroke="#2c2c2c" stroke-width="1.3" opacity="0.7"/><path d="M1.9 52.1L24 36.5" stroke="#2c2c2c" stroke-width="6.5" stroke-linecap="round"/><path d="M1.9 52.1L24 36.5" stroke="#b8b8b8" stroke-width="3.4" stroke-linecap="round"/><path d="M1.9 22.6Q8 17 16.1 15.5L25.6 17.8Q40 28 42.1 41.5L40.9 53.3L32.6 59.2L27.9 58Q28 48 23.2 41.5Q18 34 4.3 29.7Z" fill="url(#igy)" stroke="#2c2c2c" stroke-width="2"/><path d="M8 19.5Q28 26 34.5 57.5M16.1 15.5Q36 26 40.9 53.3" fill="none" stroke="#2c2c2c" stroke-width="1.3" opacity="0.75"/><path d="M4.3 29.7Q10 24 1.9 22.6" fill="none" stroke="#2c2c2c" stroke-width="1.3"/></g></g><g transform="translate(129.0 415.0) scale(0.4688)"><g><ellipse cx="32" cy="32" rx="24" ry="11.5" fill="#9a9a9a"/><ellipse cx="32" cy="32" rx="18" ry="7.6" fill="#d6d6d6"/><ellipse cx="32" cy="32" rx="8" ry="5.2" fill="#9a9a9a"/><path d="M10 6L55.2 56.7" stroke="#222" stroke-width="10" stroke-linecap="butt"/><path d="M10 6L55.2 56.7" stroke="#ececec" stroke-width="4.4" stroke-linecap="butt"/></g></g><g transform="translate(166.0 414.0) scale(0.5000)"><g stroke="#2c2c2c" stroke-width="2" stroke-linejoin="round"><path d="M3.6 60.2V35.9L47.3 6.3L60.3 11.1V60.2Z" fill="#c4c4c4"/><path d="M3.6 48L34 60.2" fill="none" stroke-width="1.5"/><path d="M13.3 11.1Q14 5 19.2 4.5L33.4 16V32L22 38L13.3 30Z" fill="#b4b4b4"/><path d="M19.2 4.5Q24 8 22 15V38L13.3 30V11.1Q14 5 19.2 4.5Z" fill="#8c8c8c"/><path d="M31 30V47A15 5.5 0 0 0 61 47V30Z" fill="url(#igy)"/><path d="M31 30L45.2 20.5L61 30A15 5 0 0 1 31 30Z" fill="#ececec"/></g></g><g transform="translate(129.0 451.0) scale(0.4688)"><g><ellipse cx="32" cy="32" rx="24" ry="11.5" fill="#9a9a9a"/><ellipse cx="32" cy="32" rx="18" ry="7.6" fill="#d6d6d6"/><ellipse cx="32" cy="32" rx="8" ry="5.2" fill="#9a9a9a"/><path d="M10 6L55.2 56.7" stroke="#222" stroke-width="10" stroke-linecap="butt"/><path d="M10 6L55.2 56.7" stroke="#ececec" stroke-width="4.4" stroke-linecap="butt"/></g></g><g transform="translate(166.0 450.0) scale(0.5000)"><g stroke-linejoin="round"><path d="M2.2 52.1L61.3 11.2" stroke="#2c2c2c" stroke-width="6.5" stroke-linecap="round"/><path d="M2.2 52.1L61.3 11.2" stroke="#b0b0b0" stroke-width="3.4" stroke-linecap="round"/><path d="M3.4 22.6Q16.4 9 33 7.9L47.6 12.6Q62 25 59.4 41.5L33 59.2L21.2 54.5Q22 44 11.7 39.1Z" fill="url(#igy)" stroke="#2c2c2c" stroke-width="2"/><path d="M3.4 22.6Q24 24 36 46L33 59.2L21.2 54.5Q22 44 11.7 39.1Z" fill="#a8a8a8" stroke="#2c2c2c" stroke-width="1.6"/><path d="M8 30Q22 32 27 56" fill="none" stroke="#2c2c2c" stroke-width="1.4"/><path d="M47.6 12.6Q40 14 36 46" fill="none" stroke="#2c2c2c" stroke-width="1.2" opacity="0.6"/></g></g><g transform="translate(129.0 487.0) scale(0.4688)"><g><ellipse cx="32" cy="32" rx="24" ry="11.5" fill="#9a9a9a"/><ellipse cx="32" cy="32" rx="18" ry="7.6" fill="#d6d6d6"/><ellipse cx="32" cy="32" rx="8" ry="5.2" fill="#9a9a9a"/><path d="M10 6L55.2 56.7" stroke="#222" stroke-width="10" stroke-linecap="butt"/><path d="M10 6L55.2 56.7" stroke="#ececec" stroke-width="4.4" stroke-linecap="butt"/></g></g><g transform="translate(166.0 486.0) scale(0.5000)"><g><path d="M36 8.4L56.1 27.3L27.8 55.7L7.7 36.3Z" fill="none" stroke="#2c2c2c" stroke-width="7.5" stroke-linejoin="round"/><path d="M36 8.4L56.1 27.3L27.8 55.7L7.7 36.3Z" fill="none" stroke="#a8a8a8" stroke-width="4" stroke-linejoin="round"/><circle cx="36" cy="8.4" r="5.2" fill="#9a9a9a" stroke="#2c2c2c" stroke-width="1.4"/><circle cx="56.1" cy="27.3" r="5.2" fill="#9a9a9a" stroke="#2c2c2c" stroke-width="1.4"/><circle cx="27.8" cy="55.7" r="5.2" fill="#9a9a9a" stroke="#2c2c2c" stroke-width="1.4"/><circle cx="7.7" cy="36.3" r="5.2" fill="#9a9a9a" stroke="#2c2c2c" stroke-width="1.4"/></g></g><g transform="translate(129.0 523.0) scale(0.4688)"><g><ellipse cx="32" cy="32" rx="24" ry="11.5" fill="#9a9a9a"/><ellipse cx="32" cy="32" rx="18" ry="7.6" fill="#d6d6d6"/><ellipse cx="32" cy="32" rx="8" ry="5.2" fill="#9a9a9a"/><path d="M10 6L55.2 56.7" stroke="#222" stroke-width="10" stroke-linecap="butt"/><path d="M10 6L55.2 56.7" stroke="#ececec" stroke-width="4.4" stroke-linecap="butt"/></g></g><g transform="translate(166.0 522.0) scale(0.5000)"><g stroke="#2c2c2c" stroke-width="2" stroke-linejoin="round"><path d="M4 26L34 8L62 22L30 42Z" fill="#e0e0e0"/><path d="M4 26L30 42V60L4 44Z" fill="url(#igy)"/><path d="M30 42L62 22V40L30 60Z" fill="#9a9a9a"/><path d="M18 26L34 16L48 23L32 34Z" fill="#b8b8b8"/><path d="M18 26L34 16V24L24 30Z" fill="#8a8a8a" stroke-width="1"/></g></g><g transform="translate(129.0 559.0) scale(0.4688)"><g><ellipse cx="32" cy="32" rx="24" ry="11.5" fill="#9a9a9a"/><ellipse cx="32" cy="32" rx="18" ry="7.6" fill="#d6d6d6"/><ellipse cx="32" cy="32" rx="8" ry="5.2" fill="#9a9a9a"/><path d="M10 6L55.2 56.7" stroke="#222" stroke-width="10" stroke-linecap="butt"/><path d="M10 6L55.2 56.7" stroke="#ececec" stroke-width="4.4" stroke-linecap="butt"/></g></g><g transform="translate(166.0 558.0) scale(0.5000)"><g stroke="#2c2c2c" stroke-width="2" stroke-linejoin="round"><path d="M3.6 60.2V35.9L47.3 6.3L60.3 11.1V60.2Z" fill="#c4c4c4"/><path d="M3.6 48L34 60.2" fill="none" stroke-width="1.5"/></g><g stroke="#2c2c2c" stroke-width="1.5" stroke-linejoin="round"><path d="M34.1 10.6L41.7 14.399999999999999L34.1 18.2L26.5 14.399999999999999Z" fill="#f2f2f2"/><path d="M26.5 14.399999999999999L34.1 18.2V25.799999999999997L26.5 22.0Z" fill="#d4d4d4"/><path d="M41.7 14.399999999999999L34.1 18.2V25.799999999999997L41.7 22.0Z" fill="#a8a8a8"/></g><g stroke="#2c2c2c" stroke-width="1.5" stroke-linejoin="round"><path d="M50.7 14.799999999999999L58.300000000000004 18.599999999999998L50.7 22.4L43.1 18.599999999999998Z" fill="#f2f2f2"/><path d="M43.1 18.599999999999998L50.7 22.4V30.0L43.1 26.2Z" fill="#d4d4d4"/><path d="M58.300000000000004 18.599999999999998L50.7 22.4V30.0L58.300000000000004 26.2Z" fill="#a8a8a8"/></g><g stroke="#2c2c2c" stroke-width="1.5" stroke-linejoin="round"><path d="M18.8 20.0L26.4 23.8L18.8 27.6L11.200000000000001 23.8Z" fill="#f2f2f2"/><path d="M11.200000000000001 23.8L18.8 27.6V35.2L11.200000000000001 31.400000000000002Z" fill="#d4d4d4"/><path d="M26.4 23.8L18.8 27.6V35.2L26.4 31.400000000000002Z" fill="#a8a8a8"/></g><g stroke="#2c2c2c" stroke-width="1.5" stroke-linejoin="round"><path d="M51.9 28.299999999999997L59.5 32.1L51.9 35.9L44.3 32.1Z" fill="#f2f2f2"/><path d="M44.3 32.1L51.9 35.9V43.5L44.3 39.699999999999996Z" fill="#d4d4d4"/><path d="M59.5 32.1L51.9 35.9V43.5L59.5 39.699999999999996Z" fill="#a8a8a8"/></g><g stroke="#2c2c2c" stroke-width="1.5" stroke-linejoin="round"><path d="M18.8 31.799999999999997L26.4 35.6L18.8 39.4L11.200000000000001 35.6Z" fill="#f2f2f2"/><path d="M11.200000000000001 35.6L18.8 39.4V47.0L11.200000000000001 43.199999999999996Z" fill="#d4d4d4"/><path d="M26.4 35.6L18.8 39.4V47.0L26.4 43.199999999999996Z" fill="#a8a8a8"/></g><g stroke="#2c2c2c" stroke-width="1.5" stroke-linejoin="round"><path d="M35.3 36.1L42.9 39.900000000000006L35.3 43.7L27.699999999999996 39.900000000000006Z" fill="#f2f2f2"/><path d="M27.699999999999996 39.900000000000006L35.3 43.7V51.300000000000004L27.699999999999996 47.5Z" fill="#d4d4d4"/><path d="M42.9 39.900000000000006L35.3 43.7V51.300000000000004L42.9 47.5Z" fill="#a8a8a8"/></g></g><g transform="translate(129.0 595.0) scale(0.4688)"><g><ellipse cx="32" cy="32" rx="24" ry="11.5" fill="#9a9a9a"/><ellipse cx="32" cy="32" rx="18" ry="7.6" fill="#d6d6d6"/><ellipse cx="32" cy="32" rx="8" ry="5.2" fill="#9a9a9a"/><path d="M10 6L55.2 56.7" stroke="#222" stroke-width="10" stroke-linecap="butt"/><path d="M10 6L55.2 56.7" stroke="#ececec" stroke-width="4.4" stroke-linecap="butt"/></g></g><g transform="translate(166.0 594.0) scale(0.5000)"><g stroke="#2c2c2c" stroke-width="2" stroke-linejoin="round"><path d="M4 26L34 8L62 22L30 42Z" fill="#e0e0e0"/><path d="M4 26L30 42V60L4 44Z" fill="url(#igy)"/><path d="M30 42L62 22V40L30 60Z" fill="#9a9a9a"/><path d="M18 26L34 16L48 23L32 34Z" fill="#b8b8b8"/><path d="M18 26L34 16V24L24 30Z" fill="#8a8a8a" stroke-width="1"/></g></g><g transform="translate(129.0 631.0) scale(0.4688)"><g><ellipse cx="32" cy="32" rx="24" ry="11.5" fill="#9a9a9a"/><ellipse cx="32" cy="32" rx="18" ry="7.6" fill="#d6d6d6"/><ellipse cx="32" cy="32" rx="8" ry="5.2" fill="#9a9a9a"/><path d="M10 6L55.2 56.7" stroke="#222" stroke-width="10" stroke-linecap="butt"/><path d="M10 6L55.2 56.7" stroke="#ececec" stroke-width="4.4" stroke-linecap="butt"/></g></g><g transform="translate(166.0 630.0) scale(0.5000)"><g stroke="#2c2c2c" stroke-width="2" stroke-linejoin="round"><path d="M3.6 60.2V35.9L47.3 6.3L60.3 11.1V60.2Z" fill="#c4c4c4"/><path d="M3.6 48L34 60.2" fill="none" stroke-width="1.5"/></g><g stroke="#2c2c2c" stroke-width="1.5" stroke-linejoin="round"><path d="M34.1 10.6L41.7 14.399999999999999L34.1 18.2L26.5 14.399999999999999Z" fill="#f2f2f2"/><path d="M26.5 14.399999999999999L34.1 18.2V25.799999999999997L26.5 22.0Z" fill="#d4d4d4"/><path d="M41.7 14.399999999999999L34.1 18.2V25.799999999999997L41.7 22.0Z" fill="#a8a8a8"/></g><g stroke="#2c2c2c" stroke-width="1.5" stroke-linejoin="round"><path d="M50.7 14.799999999999999L58.300000000000004 18.599999999999998L50.7 22.4L43.1 18.599999999999998Z" fill="#f2f2f2"/><path d="M43.1 18.599999999999998L50.7 22.4V30.0L43.1 26.2Z" fill="#d4d4d4"/><path d="M58.300000000000004 18.599999999999998L50.7 22.4V30.0L58.300000000000004 26.2Z" fill="#a8a8a8"/></g><g stroke="#2c2c2c" stroke-width="1.5" stroke-linejoin="round"><path d="M18.8 20.0L26.4 23.8L18.8 27.6L11.200000000000001 23.8Z" fill="#f2f2f2"/><path d="M11.200000000000001 23.8L18.8 27.6V35.2L11.200000000000001 31.400000000000002Z" fill="#d4d4d4"/><path d="M26.4 23.8L18.8 27.6V35.2L26.4 31.400000000000002Z" fill="#a8a8a8"/></g><g stroke="#2c2c2c" stroke-width="1.5" stroke-linejoin="round"><path d="M51.9 28.299999999999997L59.5 32.1L51.9 35.9L44.3 32.1Z" fill="#f2f2f2"/><path d="M44.3 32.1L51.9 35.9V43.5L44.3 39.699999999999996Z" fill="#d4d4d4"/><path d="M59.5 32.1L51.9 35.9V43.5L59.5 39.699999999999996Z" fill="#a8a8a8"/></g><g stroke="#2c2c2c" stroke-width="1.5" stroke-linejoin="round"><path d="M18.8 31.799999999999997L26.4 35.6L18.8 39.4L11.200000000000001 35.6Z" fill="#f2f2f2"/><path d="M11.200000000000001 35.6L18.8 39.4V47.0L11.200000000000001 43.199999999999996Z" fill="#d4d4d4"/><path d="M26.4 35.6L18.8 39.4V47.0L26.4 43.199999999999996Z" fill="#a8a8a8"/></g><g stroke="#2c2c2c" stroke-width="1.5" stroke-linejoin="round"><path d="M35.3 36.1L42.9 39.900000000000006L35.3 43.7L27.699999999999996 39.900000000000006Z" fill="#f2f2f2"/><path d="M27.699999999999996 39.900000000000006L35.3 43.7V51.300000000000004L27.699999999999996 47.5Z" fill="#d4d4d4"/><path d="M42.9 39.900000000000006L35.3 43.7V51.300000000000004L42.9 47.5Z" fill="#a8a8a8"/></g></g><g transform="translate(129.0 667.0) scale(0.4688)"><g><ellipse cx="32" cy="32" rx="24" ry="11.5" fill="#9a9a9a"/><ellipse cx="32" cy="32" rx="18" ry="7.6" fill="#d6d6d6"/><ellipse cx="32" cy="32" rx="8" ry="5.2" fill="#9a9a9a"/><path d="M10 6L55.2 56.7" stroke="#222" stroke-width="10" stroke-linecap="butt"/><path d="M10 6L55.2 56.7" stroke="#ececec" stroke-width="4.4" stroke-linecap="butt"/></g></g><g transform="translate(166.0 666.0) scale(0.5000)"><circle cx="32" cy="32" r="11" fill="#9a9a9a" stroke="#c8c8c8" stroke-width="3"/></g><g transform="translate(129.0 703.0) scale(0.4688)"><g><ellipse cx="32" cy="32" rx="24" ry="11.5" fill="#9a9a9a"/><ellipse cx="32" cy="32" rx="18" ry="7.6" fill="#d6d6d6"/><ellipse cx="32" cy="32" rx="8" ry="5.2" fill="#9a9a9a"/><path d="M10 6L55.2 56.7" stroke="#222" stroke-width="10" stroke-linecap="butt"/><path d="M10 6L55.2 56.7" stroke="#ececec" stroke-width="4.4" stroke-linecap="butt"/></g></g><g transform="translate(166.0 702.0) scale(0.5000)"><g stroke-linejoin="round"><path d="M42 24L58.7 12" stroke="#2c2c2c" stroke-width="6.5" stroke-linecap="round"/><path d="M42 24L58.7 12" stroke="#b8b8b8" stroke-width="3.4" stroke-linecap="round"/><path d="M25.6 17.8Q27 10 32.6 7.2Q44 5 51.6 10.8Q60 20 59.8 29.7L57.5 39.1L42.1 41.5Q38 28 25.6 17.8Z" fill="url(#igy2)" stroke="#2c2c2c" stroke-width="2"/><path d="M32.6 7.2Q46 16 51 36M40 6.8Q52 16 57.5 39.1" fill="none" stroke="#2c2c2c" stroke-width="1.3" opacity="0.7"/><path d="M1.9 52.1L24 36.5" stroke="#2c2c2c" stroke-width="6.5" stroke-linecap="round"/><path d="M1.9 52.1L24 36.5" stroke="#b8b8b8" stroke-width="3.4" stroke-linecap="round"/><path d="M1.9 22.6Q8 17 16.1 15.5L25.6 17.8Q40 28 42.1 41.5L40.9 53.3L32.6 59.2L27.9 58Q28 48 23.2 41.5Q18 34 4.3 29.7Z" fill="url(#igy)" stroke="#2c2c2c" stroke-width="2"/><path d="M8 19.5Q28 26 34.5 57.5M16.1 15.5Q36 26 40.9 53.3" fill="none" stroke="#2c2c2c" stroke-width="1.3" opacity="0.75"/><path d="M4.3 29.7Q10 24 1.9 22.6" fill="none" stroke="#2c2c2c" stroke-width="1.3"/></g></g><g transform="translate(169.0 775.0) scale(0.4688)"><g><ellipse cx="32" cy="32" rx="24" ry="11.5" fill="#9a9a9a"/><ellipse cx="32" cy="32" rx="18" ry="7.6" fill="#d6d6d6"/><ellipse cx="32" cy="32" rx="8" ry="5.2" fill="#9a9a9a"/><path d="M10 6L55.2 56.7" stroke="#222" stroke-width="10" stroke-linecap="butt"/><path d="M10 6L55.2 56.7" stroke="#ececec" stroke-width="4.4" stroke-linecap="butt"/></g></g><g transform="translate(206.0 773.0) scale(0.5000)"><g fill="none"><circle cx="40" cy="22" r="17" stroke="#a8a8a8" stroke-width="5"/><rect x="8" y="28" width="34" height="30" stroke="#2c2c2c" stroke-width="9"/><rect x="8" y="28" width="34" height="30" stroke="#a8a8a8" stroke-width="5"/></g></g></g><path d="M91.5 746.5H111.5L101.5 757Z" fill="#222"/><path d="M93 748H111L102 757Z" fill="#f4f4f4"/><g transform="translate(131.0 741.0) scale(0.4062)"><g><path d="M4 32C16 12 48 12 60 32C48 52 16 52 4 32Z" fill="#fff" stroke="#0c1a30" stroke-width="6"/><circle cx="32" cy="32" r="12" fill="#0c1a30"/><circle cx="27" cy="27" r="4.5" fill="#cfe"/></g></g><g transform="translate(165.0 738.0) scale(0.5000)"><g stroke-linejoin="round"><path d="M42 24L58.7 12" stroke="#280000" stroke-width="6.5" stroke-linecap="round"/><path d="M42 24L58.7 12" stroke="#ef2929" stroke-width="3.4" stroke-linecap="round"/><path d="M25.6 17.8Q27 10 32.6 7.2Q44 5 51.6 10.8Q60 20 59.8 29.7L57.5 39.1L42.1 41.5Q38 28 25.6 17.8Z" fill="url(#ir)" stroke="#280000" stroke-width="2"/><path d="M32.6 7.2Q46 16 51 36M40 6.8Q52 16 57.5 39.1" fill="none" stroke="#280000" stroke-width="1.3" opacity="0.7"/><path d="M1.9 52.1L24 36.5" stroke="#280000" stroke-width="6.5" stroke-linecap="round"/><path d="M1.9 52.1L24 36.5" stroke="#ef2929" stroke-width="3.4" stroke-linecap="round"/><path d="M1.9 22.6Q8 17 16.1 15.5L25.6 17.8Q40 28 42.1 41.5L40.9 53.3L32.6 59.2L27.9 58Q28 48 23.2 41.5Q18 34 4.3 29.7Z" fill="url(#ib)" stroke="#0b1521" stroke-width="2"/><path d="M8 19.5Q28 26 34.5 57.5M16.1 15.5Q36 26 40.9 53.3" fill="none" stroke="#0b1521" stroke-width="1.3" opacity="0.75"/><path d="M4.3 29.7Q10 24 1.9 22.6" fill="none" stroke="#0b1521" stroke-width="1.3"/></g></g><circle cx="191.5" cy="764" r="6.5" fill="#4caf50" stroke="#e8ffe8" stroke-width="1"/><path d="M191.5 760V767M188 764.5L191.5 768L195 764.5" stroke="#fff" stroke-width="2" fill="none"/><g transform="translate(9.0 1566.0) scale(0.5312)"><g><path d="M44 20L58.8 13.7L58.8 29.6L54 40L57 47L47 54L43 61L30 59.5L25 63L22 50L38 38Z" fill="#418fde"/><path d="M7 8.5L57 2L57.7 16L46 26L44 38L32 48L27 61L7 61Z" fill="#cb333b"/><path d="M7 8.5L57 2L57.7 10L14 16L14 61H7Z" fill="#e0525a" opacity="0.6"/><path d="M16.5 12H48V22.5H28.5V29H42V38.5H28.5V52.5H16.5Z" fill="#fff"/></g></g><g transform="translate(191.5 1573.0) scale(0.4375)"><g><path d="M10 2H44L54 12V62H10Z" fill="url(#ig)" stroke="#1a1a1a" stroke-width="3"/><path d="M44 2V12H54Z" fill="#9a9a9a"/><circle cx="39" cy="24" r="11.5" fill="#e01b1b" stroke="#3a0000" stroke-width="1.5"/><g stroke="#0b1521" stroke-width="2" stroke-linejoin="round"><path d="M28 24.5L42.5 31.75L28 39L13.5 31.75Z" fill="#86b2e0"/><path d="M13.5 31.75L28 39V53.5L13.5 46.25Z" fill="#3b74bd"/><path d="M42.5 31.75L28 39V53.5L42.5 46.25Z" fill="#2a5a9f"/></g></g></g><g transform="translate(1952.5 405.5) scale(0.4844)"><g stroke="#0b1521" stroke-width="2.4" stroke-linejoin="round"><path d="M29.4 4.2L42.9 10.5L23.1 25.6L9.1 20.9Z" fill="#78a5d6"/><path d="M42.9 10.5V24L23.6 39.6L23.1 25.6Z" fill="#356aae"/><path d="M42.9 24L55.9 29.7L37.2 44.8L23.6 39.6Z" fill="#78a5d6"/><path d="M9.1 20.9L23.1 25.6L23.6 39.6L37.2 44.8V58.9L9.1 49Z" fill="url(#ib2)"/><path d="M37.2 44.8L55.9 29.7V41.7L37.2 58.9Z" fill="#3a6fb5"/></g><path d="M11.5 24.5L20.8 27.6L21.3 41.3L34.9 46.5" fill="none" stroke="#8ab4e2" stroke-width="1.3" opacity="0.8"/></g><g transform="translate(1959.0 464.0) scale(0.4688)"><g stroke="#0b1521" stroke-width="2" stroke-linejoin="round"><path d="M3.5 39.1L30.7 47.4V59.2L3.5 49.7Z" fill="#5b8fd0"/><path d="M51.9 17.8L60.2 16.7V42.7L30.7 59.2V47.4Q31 26 51.9 17.8Z" fill="url(#ib2)"/><path d="M25.9 8.4L34.2 4.8L60.2 16.7L51.9 17.8Z" fill="#86b2e0"/><path d="M3.5 39.1Q4 18 25.9 8.4L51.9 17.8Q31 26 30.7 47.4Z" fill="url(#irf)" stroke="#280000"/><path d="M6.5 41.8L28 48.4V55.5L6.5 48Z" fill="none" stroke="#86b2e0" stroke-width="1.1"/></g></g><g transform="translate(1959.0 512.0) scale(0.4688)"><g stroke="#0b1521" stroke-width="2" stroke-linejoin="round"><path d="M3.3 39.1L30.5 47.4V59.2L3.3 49.7Z" fill="#5b8fd0"/><path d="M49.4 19L60 16.7V42.7L30.5 59.2V47.4Z" fill="url(#ib2)"/><path d="M23.4 10.7L34 5.5L60 16.7L49.4 19Z" fill="#86b2e0"/><path d="M3.3 39.1L23.4 10.7L49.4 19L30.5 47.4Z" fill="url(#irf)" stroke="#280000"/><path d="M6.5 41.8L28 48.4V55.5L6.5 48Z" fill="none" stroke="#86b2e0" stroke-width="1.1"/></g></g><g transform="translate(1959.0 560.0) scale(0.4688)"><circle cx="32" cy="32" r="7.5" fill="#e01b24" stroke="#4a74b0" stroke-width="3.4"/></g><g transform="translate(1959.0 608.0) scale(0.4688)"><g><path d="M6 58L58 8" stroke="#3b74bd" stroke-width="4"/><circle cx="6" cy="58" r="5" fill="#ef2929"/><circle cx="58" cy="8" r="5" fill="#ef2929"/></g></g><g transform="translate(1959.0 656.0) scale(0.4688)"><g><path d="M34 6L58 28L26 58L4 36Z" fill="none" stroke="#3b74bd" stroke-width="3.5"/><circle cx="34" cy="6" r="4.5" fill="#ef2929"/><circle cx="58" cy="28" r="4.5" fill="#ef2929"/><circle cx="26" cy="58" r="4.5" fill="#ef2929"/><circle cx="4" cy="36" r="4.5" fill="#ef2929"/></g></g><g transform="translate(1959.0 704.0) scale(0.4688)"><g><path d="M28 6V36L6 58M28 36H58" fill="none" stroke="#3b74bd" stroke-width="3.5" stroke-dasharray="12 4"/><circle cx="28" cy="6" r="4.5" fill="#ef2929"/><circle cx="28" cy="36" r="4.5" fill="#ef2929"/><circle cx="6" cy="58" r="4.5" fill="#ef2929"/><circle cx="58" cy="36" r="4.5" fill="#ef2929"/></g></g></svg>
<span class="t mn" style="left:20.7px;top:8.3px;font-size:24px;line-height:28.8px;font-weight:400;color:#fff;transform:scaleX(0.9107)">File</span>
<span class="t mn" style="left:85.0px;top:8.3px;font-size:24px;line-height:28.8px;font-weight:400;color:#fff;transform:scaleX(0.9990)">Edit</span>
<span class="t mn" style="left:154.3px;top:8.3px;font-size:24px;line-height:28.8px;font-weight:400;color:#fff;transform:scaleX(1.0005)">View</span>
<span class="t mn" style="left:232.4px;top:8.3px;font-size:24px;line-height:28.8px;font-weight:400;color:#fff;transform:scaleX(1.0408)">Tools</span>
<span class="t mn" style="left:318.5px;top:8.3px;font-size:24px;line-height:28.8px;font-weight:400;color:#fff;transform:scaleX(1.0035)">Macro</span>
<span class="t mn" style="left:414.0px;top:8.3px;font-size:24px;line-height:28.8px;font-weight:400;color:#fff;transform:scaleX(0.9584)">Sketch</span>
<span class="t mn" style="left:511.7px;top:8.3px;font-size:24px;line-height:28.8px;font-weight:400;color:#fff;transform:scaleX(0.9731)">Part Design</span>
<span class="t mn" style="left:661.8px;top:8.3px;font-size:24px;line-height:28.8px;font-weight:400;color:#fff;transform:scaleX(1.0047)">Windows</span>
<span class="t mn" style="left:787.4px;top:8.3px;font-size:24px;line-height:28.8px;font-weight:400;color:#fff;transform:scaleX(1.0174)">Help</span>
<span class="t" style="left:539.9px;top:67.3px;font-size:24px;line-height:28.8px;font-weight:400;color:#fff;transform:scaleX(0.8942)">Part Design</span>
<span class="t o" style="left:93.1px;top:236.5px;font-size:24px;line-height:28.8px;font-weight:700;color:#fff;transform:scaleX(0.9674)">Pozidriv</span>
<span class="t o" style="left:171.0px;top:272.5px;font-size:24px;line-height:28.8px;font-weight:400;color:#fff;transform:scaleX(0.9564)">Body</span>
<span class="t o" style="left:210.8px;top:308.5px;font-size:24px;line-height:28.8px;font-weight:400;color:#fff;transform:scaleX(1.0045)">Origin</span>
<span class="t o" style="left:210.9px;top:344.5px;font-size:24px;line-height:28.8px;font-weight:400;color:#fff;transform:scaleX(0.8927)">Pad</span>
<span class="t o" style="left:210.9px;top:380.5px;font-size:24px;line-height:28.8px;font-weight:400;color:#fff;transform:scaleX(0.9621)">Groove</span>
<span class="t o" style="left:210.8px;top:416.5px;font-size:24px;line-height:28.8px;font-weight:400;color:#fff;transform:scaleX(1.0266)">Mirrored</span>
<span class="t o" style="left:210.9px;top:452.5px;font-size:24px;line-height:28.8px;font-weight:400;color:#fff;transform:scaleX(0.9887)">Revolution</span>
<span class="t o" style="left:210.9px;top:488.5px;font-size:24px;line-height:28.8px;font-weight:400;color:#fff;transform:scaleX(0.9685)">DatumPlane</span>
<span class="t o" style="left:210.9px;top:524.5px;font-size:24px;line-height:28.8px;font-weight:400;color:#fff;transform:scaleX(0.9611)">Pocket</span>
<span class="t o" style="left:210.9px;top:560.5px;font-size:24px;line-height:28.8px;font-weight:400;color:#fff;transform:scaleX(0.9641)">PolarPattern</span>
<span class="t o" style="left:210.9px;top:596.5px;font-size:24px;line-height:28.8px;font-weight:400;color:#fff;transform:scaleX(0.9427)">Pocket001</span>
<span class="t o" style="left:210.9px;top:632.5px;font-size:24px;line-height:28.8px;font-weight:400;color:#fff;transform:scaleX(0.9577)">PolarPattern001</span>
<span class="t o" style="left:210.8px;top:668.5px;font-size:24px;line-height:28.8px;font-weight:400;color:#fff;transform:scaleX(1.0018)">DatumPoint</span>
<span class="t o" style="left:210.9px;top:704.5px;font-size:24px;line-height:28.8px;font-weight:400;color:#fff;transform:scaleX(0.9484)">Groove001</span>
<span class="t" style="left:210.9px;top:740.5px;font-size:24px;line-height:28.8px;font-weight:400;color:#fff;transform:scaleX(0.9585)">Groove002</span>
<span class="t o" style="left:250.7px;top:776.5px;font-size:24px;line-height:28.8px;font-weight:400;color:#fff;transform:scaleX(0.9480)">Sketch006</span>
<span class="t" style="left:8.1px;top:994.5px;font-size:24px;line-height:28.8px;font-weight:700;color:#fff;transform:scaleX(0.9171)">Base</span>
<span class="t" style="left:48.1px;top:1037.0px;font-size:24px;line-height:28.8px;font-weight:400;color:#fff;transform:scaleX(0.9521)">Label</span>
<span class="t" style="left:281.6px;top:1037.0px;font-size:24px;line-height:28.8px;font-weight:400;color:#fff;transform:scaleX(0.9854)">Groove002</span>
<span class="t" style="left:48.1px;top:1079.0px;font-size:24px;line-height:28.8px;font-weight:400;color:#fff;transform:scaleX(0.9557)">Suppressed</span>
<span class="t" style="left:281.6px;top:1079.0px;font-size:24px;line-height:28.8px;font-weight:400;color:#fff;transform:scaleX(0.9747)">false</span>
<span class="t" style="left:8.1px;top:1120.5px;font-size:24px;line-height:28.8px;font-weight:700;color:#fff;transform:scaleX(0.9868)">Groove</span>
<span class="t" style="left:48.1px;top:1163.0px;font-size:24px;line-height:28.8px;font-weight:400;color:#fff;transform:scaleX(0.9883)">Type</span>
<span class="t" style="left:281.5px;top:1163.0px;font-size:24px;line-height:28.8px;font-weight:400;color:#fff;transform:scaleX(1.0249)">Angle</span>
<span class="t" style="left:48.1px;top:1205.0px;font-size:24px;line-height:28.8px;font-weight:400;color:#fff;transform:scaleX(0.8943)">Base</span>
<span class="t" style="left:282.6px;top:1205.0px;font-size:24px;line-height:28.8px;font-weight:400;color:#fff;transform:scaleX(0.9527)">[0,00 0,00 0,00]</span>
<span class="t" style="left:48.1px;top:1247.0px;font-size:24px;line-height:28.8px;font-weight:400;color:#fff;transform:scaleX(0.9465)">Axis</span>
<span class="t" style="left:282.6px;top:1247.0px;font-size:24px;line-height:28.8px;font-weight:400;color:#fff;transform:scaleX(0.9527)">[0,00 0,00 1,00]</span>
<span class="t" style="left:48.0px;top:1289.0px;font-size:24px;line-height:28.8px;font-weight:400;color:#fff;transform:scaleX(1.0168)">Angle</span>
<span class="t" style="left:281.6px;top:1289.0px;font-size:24px;line-height:28.8px;font-weight:400;color:#fff;transform:scaleX(0.9693)">360,00 °</span>
<span class="t" style="left:48.0px;top:1331.0px;font-size:24px;line-height:28.8px;font-weight:400;color:#fff;transform:scaleX(1.0025)">Angle2</span>
<span class="t" style="left:281.6px;top:1331.0px;font-size:24px;line-height:28.8px;font-weight:400;color:#fff;transform:scaleX(0.9685)">60,00 °</span>
<span class="t" style="left:48.1px;top:1373.0px;font-size:24px;line-height:28.8px;font-weight:400;color:#fff;transform:scaleX(0.9519)">Up To Face</span>
<span class="t" style="left:48.1px;top:1415.0px;font-size:24px;line-height:28.8px;font-weight:400;color:#fff;transform:scaleX(0.9597)">Reference Axis</span>
<span class="t" style="left:281.6px;top:1415.0px;font-size:24px;line-height:28.8px;font-weight:400;color:#fff;transform:scaleX(0.9510)">Sketch006 [V_Axis]</span>
<span class="t" style="left:8.1px;top:1456.5px;font-size:24px;line-height:28.8px;font-weight:700;color:#fff;transform:scaleX(0.9853)">Part Design</span>
<span class="t" style="left:9.1px;top:1510.5px;font-size:24px;line-height:28.8px;font-weight:400;color:#b4b4b4;transform:scaleX(0.9172)">View</span>
<span class="t" style="left:76.4px;top:1513.5px;font-size:24px;line-height:28.8px;font-weight:400;color:#fff;transform:scaleX(0.8938)">Data</span>
<span class="t" style="left:62.1px;top:1572.5px;font-size:24px;line-height:28.8px;font-weight:400;color:#b0b0b0;transform:scaleX(0.9454)">Start</span>
<span class="t" style="left:242.4px;top:1575.0px;font-size:24px;line-height:28.8px;font-weight:400;color:#fff;transform:scaleX(0.9124)">Pozidriv : 1</span>
<span class="t" style="left:3.9px;top:1639.0px;font-size:24px;line-height:28.8px;font-weight:400;color:#fff;transform:scaleX(0.9155)">Preselected: Pozidriv.Body.Groove002.Edge103 (3.00 mm, -1.73 mm, -5.36 mm)</span>
<span class="t" style="left:1905.0px;top:1639.0px;font-size:24px;line-height:28.8px;font-weight:400;color:#fff;transform:scaleX(0.9207)">Radius: 2,66 mm</span>
<span class="t" style="left:2353.2px;top:1639.5px;font-size:24px;line-height:28.8px;font-weight:400;color:#fff;transform:scaleX(0.8431)">CAD</span>
<span class="t" style="left:2478.1px;top:1639.5px;font-size:24px;line-height:28.8px;font-weight:400;color:#fff;transform:scaleX(0.9315)">35,83 mm x 17,79 mm</span>
<span class="t" style="left:1987.8px;top:409.8px;font-size:24px;line-height:28.8px;font-weight:700;color:#fff;transform:scaleX(0.9441)">Edge tools</span>
<span class="t" style="left:1992.8px;top:466.8px;font-size:24px;line-height:28.8px;font-weight:400;color:#fff;transform:scaleX(0.9417)">Fillet</span>
<span class="t" style="left:1992.8px;top:514.8px;font-size:24px;line-height:28.8px;font-weight:400;color:#fff;transform:scaleX(0.9086)">Chamfer</span>
<span class="t" style="left:1992.8px;top:562.8px;font-size:24px;line-height:28.8px;font-weight:400;color:#fff;transform:scaleX(0.9285)">Create a datum point</span>
<span class="t" style="left:1992.8px;top:610.8px;font-size:24px;line-height:28.8px;font-weight:400;color:#fff;transform:scaleX(0.9206)">Create a datum line</span>
<span class="t" style="left:1992.8px;top:658.8px;font-size:24px;line-height:28.8px;font-weight:400;color:#fff;transform:scaleX(0.9151)">Create a datum plane</span>
<span class="t" style="left:1992.8px;top:706.8px;font-size:24px;line-height:28.8px;font-weight:400;color:#fff;transform:scaleX(0.9076)">Create a local coordinate system</span>
</body></html>
